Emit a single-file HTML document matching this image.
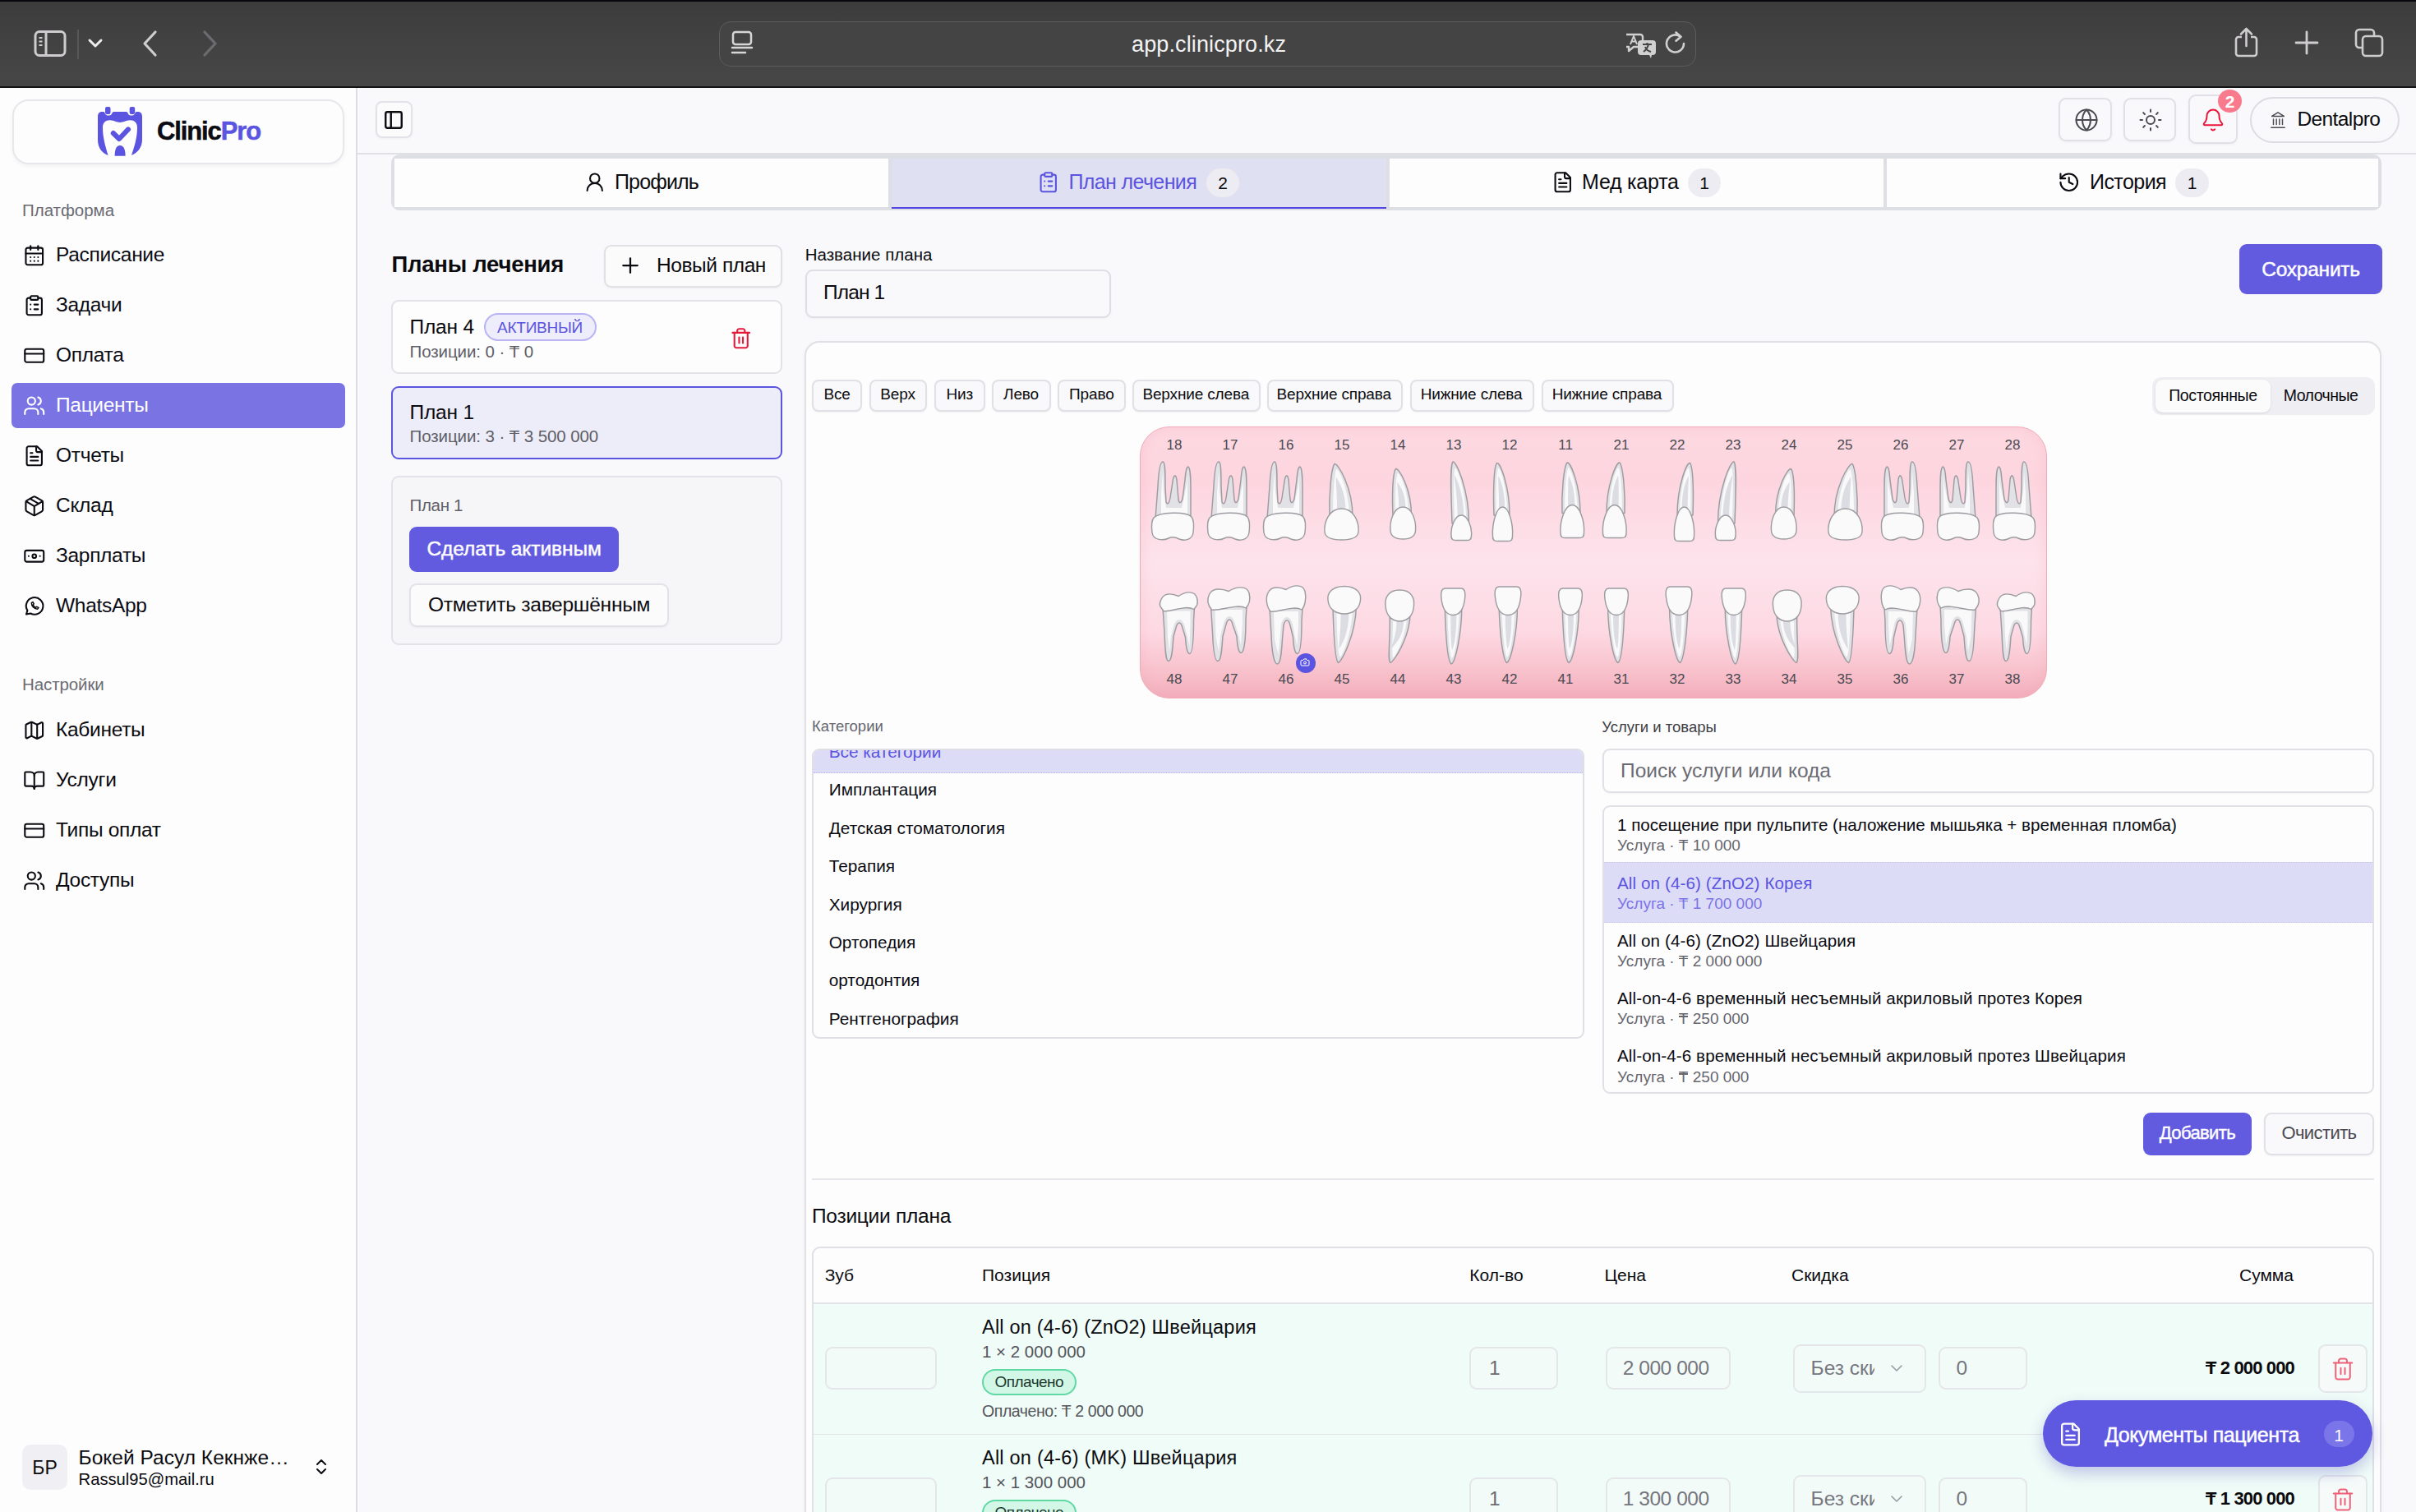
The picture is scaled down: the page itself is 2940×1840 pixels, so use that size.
<!DOCTYPE html><html><head><meta charset="utf-8"><style>*{margin:0;padding:0}
html,body{width:2940px;height:1840px;overflow:hidden;background:#f9f9fb}
body{position:relative;font-family:"Liberation Sans",sans-serif}
.t{position:absolute;white-space:nowrap;line-height:1}
.b{position:absolute}
svg.b{overflow:visible}
.tg{position:relative;display:inline-block;line-height:1}
.tg::after{content:"";position:absolute;left:0.02em;right:0.02em;top:0.305em;height:0.072em;background:currentColor}
.tgb::after{height:0.1em;top:0.3em}
</style></head><body>
<div class="b" style="left:0px;top:0px;width:2940px;height:2px;background:#07070e"></div>
<div class="b" style="left:0px;top:2px;width:2940px;height:103px;background:linear-gradient(180deg,#3c3c3c 0%,#414141 40%,#474747 100%)"></div>
<div class="b" style="left:0px;top:105px;width:2940px;height:2px;background:#141414"></div>
<svg class="b" style="left:40px;top:36px;" width="42" height="34" viewBox="0 0 42 34" fill="none"><rect x="3" y="2.5" width="36" height="29" rx="5" stroke="#cfcccf" stroke-width="3"/><path d="M16 3v28" stroke="#cfcccf" stroke-width="3"/><path d="M7.5 10h4M7.5 14.5h4M7.5 19h4" stroke="#cfcccf" stroke-width="2"/></svg>
<div class="b" style="left:94px;top:36px;width:2px;height:36px;background:#58585c"></div>
<svg class="b" style="left:106px;top:46px;" width="20" height="14" viewBox="0 0 20 14" fill="none"><path d="M3 3l7 7 7-7" stroke="#ececec" stroke-width="3" stroke-linecap="round" stroke-linejoin="round"/></svg>
<svg class="b" style="left:170px;top:36px;" width="26" height="34" viewBox="0 0 26 34" fill="none"><path d="M19 3L6 17l13 14" stroke="#cfcccf" stroke-width="3.2" stroke-linecap="round" stroke-linejoin="round"/></svg>
<svg class="b" style="left:242px;top:36px;" width="26" height="34" viewBox="0 0 26 34" fill="none"><path d="M7 3l13 14L7 31" stroke="#6c6b70" stroke-width="3.2" stroke-linecap="round" stroke-linejoin="round"/></svg>
<div class="b" style="left:875px;top:26px;width:1189px;height:55px;border:1.5px solid #5c5c60;border-radius:14px;background:#444445;box-sizing:border-box"></div>
<svg class="b" style="left:889px;top:36px;" width="30" height="32" viewBox="0 0 30 32" fill="none"><rect x="3" y="3" width="22" height="15" rx="3" stroke="#d6d6d6" stroke-width="2.5"/><path d="M2 22h24M2 28h16" stroke="#d6d6d6" stroke-width="2.5" stroke-linecap="round"/></svg>
<div class="t" style="left:1377.0px;top:41.1px;font-size:27px;color:#f2f2f2;font-weight:400;letter-spacing:0.12px;">app.clinicpro.kz</div>
<svg class="b" style="left:1975px;top:38px;" width="44" height="34" viewBox="0 0 44 34" fill="none"><path d="M4 4h17a3 3 0 0 1 3 3v9a3 3 0 0 1-3 3h-8l-6 5v-5H4" stroke="#d0d0d0" stroke-width="2.4" stroke-linejoin="round"/><path d="M9 16l4-10 4 10M10.5 12.5h5" stroke="#d0d0d0" stroke-width="2"/><rect x="18" y="11" width="22" height="18" rx="4" fill="#d0d0d0"/><path d="M32 29l2 4 1-4" fill="#d0d0d0"/><path d="M24 16h11M29.5 14v2M25 25c3-2 5-5 6-9M27 19c1 3 3 5 7 6" stroke="#444" stroke-width="2"/></svg>
<svg class="b" style="left:2022px;top:36px;" width="34" height="34" viewBox="0 0 34 34" fill="none"><path d="M27 17a10.5 10.5 0 1 1-4-8.3" stroke="#d0d0d0" stroke-width="2.6" stroke-linecap="round"/><path d="M17.5 3.5l6 5.2-6 5" stroke="#d0d0d0" stroke-width="2.6" stroke-linecap="round" stroke-linejoin="round"/></svg>
<svg class="b" style="left:2716px;top:32px;" width="38" height="40" viewBox="0 0 38 40" fill="none"><path d="M12 13H8a3 3 0 0 0-3 3v17a3 3 0 0 0 3 3h19a3 3 0 0 0 3-3V16a3 3 0 0 0-3-3h-4" stroke="#cfcccf" stroke-width="2.6"/><path d="M17.5 24V3M11 9.5l6.5-6.5 6.5 6.5" stroke="#cfcccf" stroke-width="2.6" stroke-linecap="round" stroke-linejoin="round"/></svg>
<svg class="b" style="left:2790px;top:36px;" width="34" height="32" viewBox="0 0 34 32" fill="none"><path d="M17 3v26M4 16h26" stroke="#cfcccf" stroke-width="2.8" stroke-linecap="round"/></svg>
<svg class="b" style="left:2862px;top:32px;" width="42" height="42" viewBox="0 0 42 42" fill="none"><rect x="5" y="4" width="22" height="22" rx="4" stroke="#cfcccf" stroke-width="2.6"/><rect x="13" y="12" width="24" height="24" rx="4" fill="#414141" stroke="#cfcccf" stroke-width="2.6"/></svg>
<div class="b" style="left:0px;top:107px;width:433px;height:1733px;background:#fdfdfe"></div>
<div class="b" style="left:433px;top:107px;width:2px;height:1733px;background:#dcdce3"></div>
<div class="b" style="left:435px;top:107px;width:2505px;height:1733px;background:#f9f9fb"></div>
<div class="b" style="left:15px;top:121px;width:404px;height:79px;border:2px solid #e7e7ec;border-radius:20px;background:#fdfdfe;box-sizing:border-box;box-shadow:0 2px 5px rgba(20,20,40,.05)"></div>
<svg class="b" style="left:110px;top:125px;" width="70" height="70" viewBox="0 0 70 70" fill="none"><path fill="#5b54e0" d="M9 17C9 13 11 11 14 11L16 11C17 11 17.5 12 18 13.5C19 15 20 15.5 21.5 15.5L23 15.5C25 15.5 26 14 26.5 12.5C27 11.5 27.5 11 29 11L43 11C44.5 11 45 11.5 45.5 12.5C46 14 47 15.5 49 15.5L50.5 15.5C52 15.5 53 15 54 13.5C54.5 12 55 11 56 11L58 11C61 11 63 13 63 17L63 45C63 55 57 61 50 64C54 52 57 42 57 30C57 24 53 21 48 21.3C43 21.5 40 24 36 24C32 24 29 21.5 24 21.3C19 21 15 24 15 30C15 42 18 52 21.5 64C14 61 9 55 9 45Z"/><rect x="18" y="5" width="6.5" height="9" rx="2" fill="#5b54e0"/><rect x="47.7" y="5" width="6.5" height="9" rx="2" fill="#5b54e0"/><path d="M27.8 37L35 44L46 32.4" stroke="#5b54e0" stroke-width="6" stroke-linecap="round" stroke-linejoin="round"/><path fill="#5b54e0" d="M29.6 64.8C29.6 56 32 52 36 52C40 52 42.6 56 42.6 64.8Z"/></svg>
<div class="t" style="left:191px;top:143.5px;font-size:31px;font-weight:700;letter-spacing:-1.12px;color:#0b0b12;-webkit-text-stroke:0.5px #0b0b12">Clinic<span style="color:#5b54e0;-webkit-text-stroke:0.5px #5b54e0">Pro</span></div>
<div class="t" style="left:27.0px;top:245.6px;font-size:20.5px;color:#6b6b73;font-weight:400;letter-spacing:-0.02px;">Платформа</div>
<div class="b" style="left:14px;top:466px;width:406px;height:55px;background:#7a73e4;border-radius:7px"></div>
<svg class="b" style="left:27.9px;top:296.6px" width="27.5" height="27.5" viewBox="0 0 24 24" fill="none" stroke="#0b0b12" stroke-width="1.83" stroke-linecap="round" stroke-linejoin="round" ><rect width="18" height="18" x="3" y="4" rx="2"/><path d="M8 2v4"/><path d="M16 2v4"/><path d="M3 10h18"/><path d="M8 14h.01"/><path d="M12 14h.01"/><path d="M16 14h.01"/><path d="M8 18h.01"/><path d="M12 18h.01"/><path d="M16 18h.01"/></svg>
<div class="t" style="left:68.0px;top:298.1px;font-size:24.5px;color:#0b0b12;font-weight:400;letter-spacing:0.00px;letter-spacing:-0.3px">Расписание</div>
<svg class="b" style="left:27.9px;top:357.6px" width="27.5" height="27.5" viewBox="0 0 24 24" fill="none" stroke="#0b0b12" stroke-width="1.83" stroke-linecap="round" stroke-linejoin="round" ><rect width="8" height="4" x="8" y="2" rx="1" ry="1"/><path d="M16 4h2a2 2 0 0 1 2 2v14a2 2 0 0 1-2 2H6a2 2 0 0 1-2-2V6a2 2 0 0 1 2-2h2"/><path d="M12 11h4"/><path d="M12 16h4"/><path d="M8 11h.01"/><path d="M8 16h.01"/></svg>
<div class="t" style="left:68.0px;top:359.1px;font-size:24.5px;color:#0b0b12;font-weight:400;letter-spacing:0.00px;letter-spacing:-0.3px">Задачи</div>
<svg class="b" style="left:27.9px;top:418.6px" width="27.5" height="27.5" viewBox="0 0 24 24" fill="none" stroke="#0b0b12" stroke-width="1.83" stroke-linecap="round" stroke-linejoin="round" ><rect width="20" height="14" x="2" y="5" rx="2"/><line x1="2" x2="22" y1="10" y2="10"/></svg>
<div class="t" style="left:68.0px;top:420.1px;font-size:24.5px;color:#0b0b12;font-weight:400;letter-spacing:0.00px;letter-spacing:-0.3px">Оплата</div>
<svg class="b" style="left:27.9px;top:479.6px" width="27.5" height="27.5" viewBox="0 0 24 24" fill="none" stroke="#ffffff" stroke-width="1.83" stroke-linecap="round" stroke-linejoin="round" ><path d="M16 21v-2a4 4 0 0 0-4-4H6a4 4 0 0 0-4 4v2"/><circle cx="9" cy="7" r="4"/><path d="M22 21v-2a4 4 0 0 0-3-3.87"/><path d="M16 3.13a4 4 0 0 1 0 7.75"/></svg>
<div class="t" style="left:68.0px;top:481.1px;font-size:24.5px;color:#ffffff;font-weight:400;letter-spacing:0.00px;letter-spacing:-0.3px">Пациенты</div>
<svg class="b" style="left:27.9px;top:540.5px" width="27.5" height="27.5" viewBox="0 0 24 24" fill="none" stroke="#0b0b12" stroke-width="1.83" stroke-linecap="round" stroke-linejoin="round" ><path d="M15 2H6a2 2 0 0 0-2 2v16a2 2 0 0 0 2 2h12a2 2 0 0 0 2-2V7Z"/><path d="M14 2v4a2 2 0 0 0 2 2h4"/><path d="M10 9H8"/><path d="M16 13H8"/><path d="M16 17H8"/></svg>
<div class="t" style="left:68.0px;top:542.1px;font-size:24.5px;color:#0b0b12;font-weight:400;letter-spacing:0.00px;letter-spacing:-0.3px">Отчеты</div>
<svg class="b" style="left:27.9px;top:601.5px" width="27.5" height="27.5" viewBox="0 0 24 24" fill="none" stroke="#0b0b12" stroke-width="1.83" stroke-linecap="round" stroke-linejoin="round" ><path d="M11 21.73a2 2 0 0 0 2 0l7-4A2 2 0 0 0 21 16V8a2 2 0 0 0-1-1.73l-7-4a2 2 0 0 0-2 0l-7 4A2 2 0 0 0 3 8v8a2 2 0 0 0 1 1.73z"/><path d="M12 22V12"/><path d="m3.3 7 7.703 4.734a2 2 0 0 0 1.994 0L20.7 7"/><path d="m7.5 4.27 9 5.15"/></svg>
<div class="t" style="left:68.0px;top:603.1px;font-size:24.5px;color:#0b0b12;font-weight:400;letter-spacing:0.00px;letter-spacing:-0.3px">Склад</div>
<svg class="b" style="left:27.9px;top:662.5px" width="27.5" height="27.5" viewBox="0 0 24 24" fill="none" stroke="#0b0b12" stroke-width="1.83" stroke-linecap="round" stroke-linejoin="round" ><rect width="20" height="12" x="2" y="6" rx="2"/><circle cx="12" cy="12" r="2"/><path d="M6 12h.01M18 12h.01"/></svg>
<div class="t" style="left:68.0px;top:664.1px;font-size:24.5px;color:#0b0b12;font-weight:400;letter-spacing:0.00px;letter-spacing:-0.3px">Зарплаты</div>
<svg class="b" style="left:27.9px;top:723.5px" width="27.5" height="27.5" viewBox="0 0 24 24" fill="none" stroke="#0b0b12" stroke-width="1.83" stroke-linecap="round" stroke-linejoin="round" ><path d="M3.5 20.5l1.2-4A9 9 0 1 1 8 19.6z"/><path d="M9 8.5c0 3.5 3 6.5 6.5 6.5l1-1.5-2-1-1 .8c-1.2-.5-2.3-1.6-2.8-2.8l.8-1-1-2z" stroke-width="1.3"/></svg>
<div class="t" style="left:68.0px;top:725.1px;font-size:24.5px;color:#0b0b12;font-weight:400;letter-spacing:0.00px;letter-spacing:-0.3px">WhatsApp</div>
<div class="t" style="left:27.0px;top:822.6px;font-size:20.5px;color:#6b6b73;font-weight:400;letter-spacing:0.00px;letter-spacing:-0.1px">Настройки</div>
<svg class="b" style="left:27.9px;top:874.5px" width="27.5" height="27.5" viewBox="0 0 24 24" fill="none" stroke="#0b0b12" stroke-width="1.83" stroke-linecap="round" stroke-linejoin="round" ><path d="M14.106 5.553a2 2 0 0 0 1.788 0l3.659-1.83A1 1 0 0 1 21 4.619v12.764a1 1 0 0 1-.553.894l-4.553 2.277a2 2 0 0 1-1.788 0l-4.212-2.106a2 2 0 0 0-1.788 0l-3.659 1.83A1 1 0 0 1 3 19.381V6.618a1 1 0 0 1 .553-.894l4.553-2.277a2 2 0 0 1 1.788 0z"/><path d="M15 5.764v15"/><path d="M9 3.236v15"/></svg>
<div class="t" style="left:68.0px;top:876.1px;font-size:24.5px;color:#0b0b0f;font-weight:400;letter-spacing:0.00px;letter-spacing:-0.3px">Кабинеты</div>
<svg class="b" style="left:27.9px;top:935.5px" width="27.5" height="27.5" viewBox="0 0 24 24" fill="none" stroke="#0b0b12" stroke-width="1.83" stroke-linecap="round" stroke-linejoin="round" ><path d="M12 7v14"/><path d="M3 18a1 1 0 0 1-1-1V4a1 1 0 0 1 1-1h5a4 4 0 0 1 4 4 4 4 0 0 1 4-4h5a1 1 0 0 1 1 1v13a1 1 0 0 1-1 1h-6a3 3 0 0 0-3 3 3 3 0 0 0-3-3z"/></svg>
<div class="t" style="left:68.0px;top:937.1px;font-size:24.5px;color:#0b0b0f;font-weight:400;letter-spacing:0.00px;letter-spacing:-0.3px">Услуги</div>
<svg class="b" style="left:27.9px;top:996.5px" width="27.5" height="27.5" viewBox="0 0 24 24" fill="none" stroke="#0b0b12" stroke-width="1.83" stroke-linecap="round" stroke-linejoin="round" ><rect width="20" height="14" x="2" y="5" rx="2"/><line x1="2" x2="22" y1="10" y2="10"/></svg>
<div class="t" style="left:68.0px;top:998.1px;font-size:24.5px;color:#0b0b0f;font-weight:400;letter-spacing:0.00px;letter-spacing:-0.3px">Типы оплат</div>
<svg class="b" style="left:27.9px;top:1057.5px" width="27.5" height="27.5" viewBox="0 0 24 24" fill="none" stroke="#0b0b12" stroke-width="1.83" stroke-linecap="round" stroke-linejoin="round" ><path d="M16 21v-2a4 4 0 0 0-4-4H6a4 4 0 0 0-4 4v2"/><circle cx="9" cy="7" r="4"/><path d="M22 21v-2a4 4 0 0 0-3-3.87"/><path d="M16 3.13a4 4 0 0 1 0 7.75"/></svg>
<div class="t" style="left:68.0px;top:1059.1px;font-size:24.5px;color:#0b0b0f;font-weight:400;letter-spacing:0.00px;letter-spacing:-0.3px">Доступы</div>
<div class="b" style="left:27px;top:1758px;width:55px;height:55px;background:#efeff4;border-radius:10px"></div>
<div class="t" style="left:39.3px;top:1775.3px;font-size:23px;color:#0b0b0f;font-weight:400;letter-spacing:0.00px;">БР</div>
<div class="t" style="left:95.6px;top:1761.6px;font-size:24.5px;color:#0b0b0f;font-weight:400;letter-spacing:0.02px;">Бокей Расул Кекнже…</div>
<div class="t" style="left:95.6px;top:1789.9px;font-size:20.2px;color:#0b0b0f;font-weight:400;letter-spacing:0.00px;">Rassul95@mail.ru</div>
<svg class="b" style="left:379.0px;top:1773.0px" width="24" height="24" viewBox="0 0 24 24" fill="none" stroke="#0b0b12" stroke-width="2.0" stroke-linecap="round" stroke-linejoin="round" ><path d="m7 15 5 5 5-5"/><path d="m7 9 5-5 5 5"/></svg>
<div class="b" style="left:435px;top:186px;width:2505px;height:2px;background:#e0e0e6"></div>
<div class="b" style="left:457px;top:123px;width:45px;height:45px;border:2px solid #e2e2e8;border-radius:8px;background:#fbfbfc;box-sizing:border-box;box-shadow:0 1px 3px rgba(0,0,0,.04)"></div>
<svg class="b" style="left:465.5px;top:132.5px" width="26" height="26" viewBox="0 0 24 24" fill="none" stroke="#0b0b12" stroke-width="2.2" stroke-linecap="round" stroke-linejoin="round" ><rect width="18" height="18" x="3" y="3" rx="2"/><path d="M9 3v18"/></svg>
<div class="b" style="left:2505px;top:119px;width:65px;height:53px;border:2px solid #e0e0e6;border-radius:9px;background:#f9f9fb;box-sizing:border-box;box-shadow:0 1px 3px rgba(0,0,0,.05)"></div>
<svg class="b" style="left:2523.5px;top:130.5px" width="30" height="30" viewBox="0 0 24 24" fill="none" stroke="#4a4a52" stroke-width="1.6" stroke-linecap="round" stroke-linejoin="round" ><circle cx="12" cy="12" r="10"/><path d="M12 2a14.5 14.5 0 0 0 0 20 14.5 14.5 0 0 0 0-20"/><path d="M2 12h20"/></svg>
<div class="b" style="left:2584px;top:119px;width:64px;height:53px;border:2px solid #e0e0e6;border-radius:9px;background:#f9f9fb;box-sizing:border-box;box-shadow:0 1px 3px rgba(0,0,0,.05)"></div>
<svg class="b" style="left:2601.5px;top:130.5px" width="30" height="30" viewBox="0 0 24 24" fill="none" stroke="#4a4a52" stroke-width="1.6" stroke-linecap="round" stroke-linejoin="round" ><circle cx="12" cy="12" r="4"/><path d="M12 2v2"/><path d="M12 20v2"/><path d="m4.93 4.93 1.41 1.41"/><path d="m17.66 17.66 1.41 1.41"/><path d="M2 12h2"/><path d="M20 12h2"/><path d="m6.34 17.66-1.41 1.41"/><path d="m19.07 4.93-1.41 1.41"/></svg>
<div class="b" style="left:2663px;top:115px;width:60px;height:60px;border:2px solid #e0e0e6;border-radius:9px;background:#f9f9fb;box-sizing:border-box;box-shadow:0 1px 3px rgba(0,0,0,.05)"></div>
<svg class="b" style="left:2677.5px;top:130.5px" width="30" height="30" viewBox="0 0 24 24" fill="none" stroke="#e8173a" stroke-width="1.6" stroke-linecap="round" stroke-linejoin="round" ><path d="M10.268 21a2 2 0 0 0 3.464 0"/><path d="M3.262 15.326A1 1 0 0 0 4 17h16a1 1 0 0 0 .74-1.673C19.41 13.956 18 12.499 18 8A6 6 0 0 0 6 8c0 4.499-1.411 5.956-2.738 7.326"/></svg>
<div class="b" style="left:2699px;top:109px;width:29px;height:28px;background:#f87a8c;border-radius:50%"></div>
<div class="t" style="left:2707.7px;top:113.2px;font-size:21px;color:#fff;font-weight:700;letter-spacing:0.00px;">2</div>
<div class="b" style="left:2738px;top:118px;width:182px;height:56px;border:2px solid #dcdce2;border-radius:28px;box-sizing:border-box"></div>
<svg class="b" style="left:2760.5px;top:134.5px" width="22" height="22" viewBox="0 0 24 24" fill="none" stroke="#4a4a52" stroke-width="1.6" stroke-linecap="round" stroke-linejoin="round" ><line x1="3" x2="21" y1="22" y2="22"/><line x1="6" x2="6" y1="18" y2="11"/><line x1="10" x2="10" y1="18" y2="11"/><line x1="14" x2="14" y1="18" y2="11"/><line x1="18" x2="18" y1="18" y2="11"/><polygon points="12 2 20 7 4 7"/></svg>
<div class="t" style="left:2795.4px;top:133.4px;font-size:24.5px;color:#0b0b0f;font-weight:400;letter-spacing:-0.58px;">Dentalpro</div>
<div class="b" style="left:476px;top:188px;width:2422px;height:68px;background:#dedee5;border-radius:10px"></div>
<div class="b" style="left:480px;top:193px;width:601px;height:59px;background:#fdfdfe"></div>
<div class="b" style="left:1085px;top:193px;width:602px;height:59px;background:#e0e0f3"></div>
<div class="b" style="left:1085px;top:252px;width:602px;height:2px;background:#4f46e5"></div>
<div class="b" style="left:1691px;top:193px;width:601px;height:59px;background:#fdfdfe"></div>
<div class="b" style="left:2296px;top:193px;width:598px;height:59px;background:#fdfdfe"></div>
<div class="b" style="left:2888px;top:193px;width:6px;height:59px;background:#fdfdfe"></div>
<svg class="b" style="left:709.8px;top:207.8px" width="27.5" height="27.5" viewBox="0 0 24 24" fill="none" stroke="#0b0b12" stroke-width="1.83" stroke-linecap="round" stroke-linejoin="round" ><circle cx="12" cy="8" r="5"/><path d="M20 21a8 8 0 0 0-16 0"/></svg>
<div class="t" style="left:748.0px;top:208.8px;font-size:25px;color:#0b0b0f;font-weight:400;letter-spacing:-0.85px;">Профиль</div>
<svg class="b" style="left:1261.8px;top:207.5px" width="27.5" height="27.5" viewBox="0 0 24 24" fill="none" stroke="#5b54e0" stroke-width="1.83" stroke-linecap="round" stroke-linejoin="round" ><rect width="8" height="4" x="8" y="2" rx="1" ry="1"/><path d="M16 4h2a2 2 0 0 1 2 2v14a2 2 0 0 1-2 2H6a2 2 0 0 1-2-2V6a2 2 0 0 1 2-2h2"/><path d="M12 11h4"/><path d="M12 16h4"/><path d="M8 11h.01"/><path d="M8 16h.01"/></svg>
<div class="t" style="left:1300.5px;top:208.8px;font-size:25px;color:#5b54e0;font-weight:400;letter-spacing:-0.63px;">План лечения</div>
<div class="b" style="left:1468px;top:205px;width:40px;height:35px;background:#ececf2;border-radius:18px"></div>
<div class="t" style="left:1482.2px;top:212.2px;font-size:21px;color:#0b0b0f;font-weight:400;letter-spacing:0.00px;">2</div>
<svg class="b" style="left:1888.1px;top:207.5px" width="27.5" height="27.5" viewBox="0 0 24 24" fill="none" stroke="#0b0b12" stroke-width="1.83" stroke-linecap="round" stroke-linejoin="round" ><path d="M15 2H6a2 2 0 0 0-2 2v16a2 2 0 0 0 2 2h12a2 2 0 0 0 2-2V7Z"/><path d="M14 2v4a2 2 0 0 0 2 2h4"/><path d="M10 9H8"/><path d="M16 13H8"/><path d="M16 17H8"/></svg>
<div class="t" style="left:1925.0px;top:208.8px;font-size:25px;color:#0b0b0f;font-weight:400;letter-spacing:-0.23px;">Мед карта</div>
<div class="b" style="left:2054px;top:205px;width:40px;height:35px;background:#ececf2;border-radius:18px"></div>
<div class="t" style="left:2068.2px;top:212.2px;font-size:21px;color:#0b0b0f;font-weight:400;letter-spacing:0.00px;">1</div>
<svg class="b" style="left:2503.8px;top:207.8px" width="27.5" height="27.5" viewBox="0 0 24 24" fill="none" stroke="#0b0b12" stroke-width="1.83" stroke-linecap="round" stroke-linejoin="round" ><path d="M3 12a9 9 0 1 0 9-9 9.75 9.75 0 0 0-6.74 2.74L3 8"/><path d="M3 3v5h5"/><path d="M12 7v5l4 2"/></svg>
<div class="t" style="left:2543.0px;top:208.8px;font-size:25px;color:#0b0b0f;font-weight:400;letter-spacing:-0.56px;">История</div>
<div class="b" style="left:2647px;top:205px;width:41px;height:35px;background:#ececf2;border-radius:18px"></div>
<div class="t" style="left:2661.7px;top:212.2px;font-size:21px;color:#0b0b0f;font-weight:400;letter-spacing:0.00px;">1</div>
<div class="t" style="left:476.5px;top:308.4px;font-size:27.5px;color:#0b0b0f;font-weight:700;letter-spacing:-0.25px;">Планы лечения</div>
<div class="b" style="left:735px;top:298px;width:217px;height:52px;border:2px solid #e0e0e6;border-radius:9px;background:#fbfbfc;box-sizing:border-box;box-shadow:0 1px 3px rgba(0,0,0,.05)"></div>
<svg class="b" style="left:752.0px;top:308.0px" width="30" height="30" viewBox="0 0 24 24" fill="none" stroke="#0b0b12" stroke-width="1.8" stroke-linecap="round" stroke-linejoin="round" ><path d="M5 12h14"/><path d="M12 5v14"/></svg>
<div class="t" style="left:799.0px;top:311.0px;font-size:24.5px;color:#0b0b0f;font-weight:400;letter-spacing:-0.42px;">Новый план</div>
<div class="b" style="left:476px;top:365px;width:476px;height:90px;border:2px solid #e2e2e8;border-radius:9px;background:#fdfdfe;box-sizing:border-box"></div>
<div class="t" style="left:498.6px;top:386.3px;font-size:24.5px;color:#0b0b0f;font-weight:400;letter-spacing:0.00px;letter-spacing:-0.2px">План 4</div>
<div class="b" style="left:589px;top:381px;width:137px;height:34px;border:2px solid #b9b4f4;border-radius:17px;background:#eeedfc;box-sizing:border-box"></div>
<div class="t" style="left:605.0px;top:389.4px;font-size:19px;color:#5b54e0;font-weight:400;letter-spacing:-0.23px;">АКТИВНЫЙ</div>
<div class="t" style="left:498.6px;top:417.6px;font-size:20.5px;color:#5f5f67;font-weight:400;letter-spacing:0.00px;letter-spacing:-0.1px">Позиции: 0 · <span class="tg">T</span> 0</div>
<svg class="b" style="left:888.2px;top:397.8px" width="27.5" height="27.5" viewBox="0 0 24 24" fill="none" stroke="#e5193a" stroke-width="1.83" stroke-linecap="round" stroke-linejoin="round" ><path d="M3 6h18"/><path d="M19 6v14c0 1-1 2-2 2H7c-1 0-2-1-2-2V6"/><path d="M8 6V4c0-1 1-2 2-2h4c1 0 2 1 2 2v2"/><line x1="10" x2="10" y1="11" y2="17"/><line x1="14" x2="14" y1="11" y2="17"/></svg>
<div class="b" style="left:476px;top:470px;width:476px;height:89px;border:2.5px solid #5b54e0;border-radius:9px;background:#ededf9;box-sizing:border-box"></div>
<div class="t" style="left:498.6px;top:490.3px;font-size:24.5px;color:#0b0b0f;font-weight:400;letter-spacing:0.00px;letter-spacing:-0.2px">План 1</div>
<div class="t" style="left:498.6px;top:520.6px;font-size:20.5px;color:#5f5f67;font-weight:400;letter-spacing:0.00px;letter-spacing:-0.1px">Позиции: 3 · <span class="tg">T</span> 3 500 000</div>
<div class="b" style="left:476px;top:579px;width:476px;height:206px;border:2px solid #e2e2e8;border-radius:9px;background:#f6f6f9;box-sizing:border-box"></div>
<div class="t" style="left:498.6px;top:604.9px;font-size:20.5px;color:#5f5f67;font-weight:400;letter-spacing:-0.35px;">План 1</div>
<div class="b" style="left:498px;top:641px;width:255px;height:55px;background:#635bdf;border-radius:9px"></div>
<div class="t" style="left:519.4px;top:656.3px;font-size:24.5px;color:#fff;font-weight:400;letter-spacing:-0.07px;-webkit-text-stroke:0.45px #fff">Сделать активным</div>
<div class="b" style="left:498px;top:710px;width:316px;height:53px;border:2px solid #e2e2e8;border-radius:9px;background:#fbfbfc;box-sizing:border-box;box-shadow:0 1px 3px rgba(0,0,0,.05)"></div>
<div class="t" style="left:521.0px;top:724.3px;font-size:24.5px;color:#0b0b0f;font-weight:400;letter-spacing:-0.26px;">Отметить завершённым</div>
<div class="t" style="left:979.7px;top:299.9px;font-size:20.5px;color:#0b0b0f;font-weight:400;letter-spacing:0.02px;">Название плана</div>
<div class="b" style="left:980px;top:328px;width:372px;height:59px;border:2px solid #dedee4;border-radius:9px;background:#f9f9fb;box-sizing:border-box;box-shadow:0 1px 3px rgba(0,0,0,.04)"></div>
<div class="t" style="left:1002.0px;top:344.3px;font-size:24.5px;color:#0b0b0f;font-weight:400;letter-spacing:-0.86px;">План 1</div>
<div class="b" style="left:2725px;top:297px;width:174px;height:61px;background:#635bdf;border-radius:9px"></div>
<div class="t" style="left:2752.2px;top:315.6px;font-size:24.5px;color:#fff;font-weight:400;letter-spacing:-0.23px;-webkit-text-stroke:0.45px #fff">Сохранить</div>
<div class="b" style="left:979px;top:415px;width:1919px;height:1485px;border:2px solid #e0e0e6;border-radius:18px;background:#fdfdfe;box-sizing:border-box;box-shadow:0 1px 4px rgba(0,0,0,.04)"></div>
<div class="b" style="left:988px;top:461.5px;width:61px;height:39.5px;border:2px solid #e0e0e6;border-radius:8px;background:#f9f9fb;box-sizing:border-box;box-shadow:0 1px 2px rgba(0,0,0,.05)"></div>
<div class="t" style="left:1002.5px;top:470.4px;font-size:19px;color:#0b0b0f;font-weight:400;letter-spacing:0.00px;letter-spacing:-0.15px">Все</div>
<div class="b" style="left:1058px;top:461.5px;width:70px;height:39.5px;border:2px solid #e0e0e6;border-radius:8px;background:#f9f9fb;box-sizing:border-box;box-shadow:0 1px 2px rgba(0,0,0,.05)"></div>
<div class="t" style="left:1071.3px;top:470.4px;font-size:19px;color:#0b0b0f;font-weight:400;letter-spacing:0.00px;letter-spacing:-0.15px">Верх</div>
<div class="b" style="left:1137px;top:461.5px;width:62px;height:39.5px;border:2px solid #e0e0e6;border-radius:8px;background:#f9f9fb;box-sizing:border-box;box-shadow:0 1px 2px rgba(0,0,0,.05)"></div>
<div class="t" style="left:1151.4px;top:470.4px;font-size:19px;color:#0b0b0f;font-weight:400;letter-spacing:0.00px;letter-spacing:-0.15px">Низ</div>
<div class="b" style="left:1207px;top:461.5px;width:72px;height:39.5px;border:2px solid #e0e0e6;border-radius:8px;background:#f9f9fb;box-sizing:border-box;box-shadow:0 1px 2px rgba(0,0,0,.05)"></div>
<div class="t" style="left:1221.1px;top:470.4px;font-size:19px;color:#0b0b0f;font-weight:400;letter-spacing:0.00px;letter-spacing:-0.15px">Лево</div>
<div class="b" style="left:1287px;top:461.5px;width:83px;height:39.5px;border:2px solid #e0e0e6;border-radius:8px;background:#f9f9fb;box-sizing:border-box;box-shadow:0 1px 2px rgba(0,0,0,.05)"></div>
<div class="t" style="left:1301.1px;top:470.4px;font-size:19px;color:#0b0b0f;font-weight:400;letter-spacing:0.00px;letter-spacing:-0.15px">Право</div>
<div class="b" style="left:1378px;top:461.5px;width:156px;height:39.5px;border:2px solid #e0e0e6;border-radius:8px;background:#f9f9fb;box-sizing:border-box;box-shadow:0 1px 2px rgba(0,0,0,.05)"></div>
<div class="t" style="left:1390.4px;top:470.4px;font-size:19px;color:#0b0b0f;font-weight:400;letter-spacing:0.00px;letter-spacing:-0.15px">Верхние слева</div>
<div class="b" style="left:1542px;top:461.5px;width:165px;height:39.5px;border:2px solid #e0e0e6;border-radius:8px;background:#f9f9fb;box-sizing:border-box;box-shadow:0 1px 2px rgba(0,0,0,.05)"></div>
<div class="t" style="left:1553.6px;top:470.4px;font-size:19px;color:#0b0b0f;font-weight:400;letter-spacing:0.00px;letter-spacing:-0.15px">Верхние справа</div>
<div class="b" style="left:1716px;top:461.5px;width:151px;height:39.5px;border:2px solid #e0e0e6;border-radius:8px;background:#f9f9fb;box-sizing:border-box;box-shadow:0 1px 2px rgba(0,0,0,.05)"></div>
<div class="t" style="left:1728.7px;top:470.4px;font-size:19px;color:#0b0b0f;font-weight:400;letter-spacing:0.00px;letter-spacing:-0.15px">Нижние слева</div>
<div class="b" style="left:1876px;top:461.5px;width:161px;height:39.5px;border:2px solid #e0e0e6;border-radius:8px;background:#f9f9fb;box-sizing:border-box;box-shadow:0 1px 2px rgba(0,0,0,.05)"></div>
<div class="t" style="left:1888.8px;top:470.4px;font-size:19px;color:#0b0b0f;font-weight:400;letter-spacing:0.00px;letter-spacing:-0.15px">Нижние справа</div>
<div class="b" style="left:2619px;top:458.5px;width:271px;height:46.5px;background:#eeeef3;border-radius:11px"></div>
<div class="b" style="left:2623px;top:461.5px;width:140px;height:40.5px;background:#fbfbfc;border-radius:9px;box-shadow:0 1px 3px rgba(0,0,0,.10)"></div>
<div class="t" style="left:2639.2px;top:472.0px;font-size:19.5px;color:#0b0b0f;font-weight:400;letter-spacing:-0.36px;">Постоянные</div>
<div class="t" style="left:2778.8px;top:472.0px;font-size:19.5px;color:#0b0b0f;font-weight:400;letter-spacing:-0.53px;">Молочные</div>
<div class="b" style="left:1387px;top:519px;width:1104px;height:331px;border:1.5px solid #f1a9b6;border-radius:36px;box-sizing:border-box;background:linear-gradient(180deg,#fdd9e1 0%,#fdd5df 20%,#fde3ec 50%,#fdd9e3 76%,#f7bec9 92%,#f3afbc 100%);box-shadow:inset 0 0 16px rgba(235,140,165,.20)"></div>
<svg class="b" style="left:0;top:0" width="2940" height="1840" viewBox="0 0 2940 1840"><g><path d="M1406,631 L1409,592 C1410,572 1412,562 1415,562 C1418,562 1418,575 1418,592 L1419,611 C1421,615 1423,612 1424,606 L1427,586 C1428,578 1431,576 1432,584 L1434,608 C1435,613 1437,613 1439,607 L1442,584 C1443,572 1444,568 1446,568 C1449,570 1449,584 1449,600 L1449,631 Z" fill="#e1e1e6" stroke="#9c9ca1" stroke-width="1.45" stroke-linejoin="round"/><path d="M1413,628 L1413,600 L1415,574 L1416,598 L1419,618 L1438,618 L1444,590 L1445,578 L1445,628 Z" fill="#f9f9fa" stroke-linejoin="round"/><path d="M1404,630 C1411,623 1443,622 1450,629 C1453,633 1453,640 1452,648 C1451,656 1443,659 1435,656 C1431,654 1426,653 1422,655 C1416,658 1403,658 1402,648 C1401,640 1401,634 1404,630 Z" fill="#fafafb" stroke="#9c9ca1" stroke-width="1.45" stroke-linejoin="round"/><path d="M1474,631 L1477,592 C1478,572 1480,562 1483,562 C1486,562 1486,575 1486,592 L1487,611 C1489,615 1491,612 1492,606 L1495,586 C1496,578 1499,576 1500,584 L1502,608 C1503,613 1505,613 1507,607 L1510,584 C1511,572 1512,568 1514,568 C1517,570 1517,584 1517,600 L1517,631 Z" fill="#e1e1e6" stroke="#9c9ca1" stroke-width="1.45" stroke-linejoin="round"/><path d="M1481,628 L1481,600 L1483,574 L1484,598 L1487,618 L1506,618 L1512,590 L1513,578 L1513,628 Z" fill="#f9f9fa" stroke-linejoin="round"/><path d="M1472,630 C1479,623 1511,622 1518,629 C1521,633 1521,640 1520,648 C1519,656 1511,659 1503,656 C1499,654 1494,653 1490,655 C1484,658 1471,658 1470,648 C1469,640 1469,634 1472,630 Z" fill="#fafafb" stroke="#9c9ca1" stroke-width="1.45" stroke-linejoin="round"/><path d="M1542,631 L1545,592 C1546,572 1548,562 1551,562 C1554,562 1554,575 1554,592 L1555,611 C1557,615 1559,612 1560,606 L1563,586 C1564,578 1567,576 1568,584 L1570,608 C1571,613 1573,613 1575,607 L1578,584 C1579,572 1580,568 1582,568 C1585,570 1585,584 1585,600 L1585,631 Z" fill="#e1e1e6" stroke="#9c9ca1" stroke-width="1.45" stroke-linejoin="round"/><path d="M1549,628 L1549,600 L1551,574 L1552,598 L1555,618 L1574,618 L1580,590 L1581,578 L1581,628 Z" fill="#f9f9fa" stroke-linejoin="round"/><path d="M1540,630 C1547,623 1579,622 1586,629 C1589,633 1589,640 1588,648 C1587,656 1579,659 1571,656 C1567,654 1562,653 1558,655 C1552,658 1539,658 1538,648 C1537,640 1537,634 1540,630 Z" fill="#fafafb" stroke="#9c9ca1" stroke-width="1.45" stroke-linejoin="round"/><path d="M1618,629 C1617,602.75 1620,569.5 1624,564.5 C1628,563.5 1646,592.75 1646,629 Z" fill="#e1e1e6" stroke="#9c9ca1" stroke-width="1.45" stroke-linejoin="round"/><path d="M1618,629 C1617,602.75 1620,569.5 1624,564.5 C1628,563.5 1646,592.75 1646,629 Z" fill="#f9f9fa" stroke-linejoin="round" transform="translate(1632.00,629.00) scale(0.7,0.9) translate(-1632.00,-629.00)"/><path d="M1627.24,625 C1627.24,596.75 1625,584.5 1626,580.5 C1628,584.5 1638.16,596.75 1637.6,625 Z" fill="#dcdde3" stroke-linejoin="round"/><path d="M1632.5,619 C1648.08,619 1654,636.1 1653,647.5 C1652,655 1642.75,657 1632.5,657 C1622.25,657 1613,655 1612,647.5 C1611,636.1 1616.92,619 1632.5,619 Z" fill="#fafafb" stroke="#9c9ca1" stroke-width="1.45" stroke-linejoin="round"/><path d="M1695,627 C1694,604.75 1694.5,575.5 1698.5,570.5 C1702.5,569.5 1717.5,594.75 1717.5,627 Z" fill="#e1e1e6" stroke="#9c9ca1" stroke-width="1.45" stroke-linejoin="round"/><path d="M1695,627 C1694,604.75 1694.5,575.5 1698.5,570.5 C1702.5,569.5 1717.5,594.75 1717.5,627 Z" fill="#f9f9fa" stroke-linejoin="round" transform="translate(1706.25,627.00) scale(0.7,0.9) translate(-1706.25,-627.00)"/><path d="M1702.425,623 C1702.425,598.75 1699.5,590.5 1700.5,586.5 C1702.5,590.5 1711.2,598.75 1710.75,623 Z" fill="#dcdde3" stroke-linejoin="round"/><path d="M1707.25,617 C1718.84,617 1723.5,634.55 1722.5,646.25 C1721.5,654 1714.875,656 1707.25,656 C1699.625,656 1693,654 1692,646.25 C1691,634.55 1695.66,617 1707.25,617 Z" fill="#fafafb" stroke="#9c9ca1" stroke-width="1.45" stroke-linejoin="round"/><path d="M1767,637 C1766,605.5 1764,567 1768,562 C1772,561 1787.5,595.5 1787.5,637 Z" fill="#e1e1e6" stroke="#9c9ca1" stroke-width="1.45" stroke-linejoin="round"/><path d="M1767,637 C1766,605.5 1764,567 1768,562 C1772,561 1787.5,595.5 1787.5,637 Z" fill="#f9f9fa" stroke-linejoin="round" transform="translate(1777.25,637.00) scale(0.7,0.9) translate(-1777.25,-637.00)"/><path d="M1773.765,633 C1773.765,599.5 1769,582 1770,578 C1772,582 1781.76,599.5 1781.35,633 Z" fill="#dcdde3" stroke-linejoin="round"/><path d="M1766,651.5 C1765,642.25 1770.3,627 1778.25,627 C1786.2,627 1791.5,642.25 1790.5,651.5 C1790.5,657.5 1787.5,657.5 1784.5,657.5 L1772,657.5 C1769,657.5 1766,657.5 1766,651.5 Z" fill="#fafafb" stroke="#9c9ca1" stroke-width="1.45" stroke-linejoin="round"/><path d="M1818,627 C1817,601.25 1817.5,568.5 1821.5,563.5 C1825.5,562.5 1837,591.25 1837,627 Z" fill="#e1e1e6" stroke="#9c9ca1" stroke-width="1.45" stroke-linejoin="round"/><path d="M1818,627 C1817,601.25 1817.5,568.5 1821.5,563.5 C1825.5,562.5 1837,591.25 1837,627 Z" fill="#f9f9fa" stroke-linejoin="round" transform="translate(1827.50,627.00) scale(0.7,0.9) translate(-1827.50,-627.00)"/><path d="M1824.27,623 C1824.27,595.25 1822.5,583.5 1823.5,579.5 C1825.5,583.5 1831.68,595.25 1831.3,623 Z" fill="#dcdde3" stroke-linejoin="round"/><path d="M1816.5,652.5 C1815.5,637.75 1820.7,617 1828.5,617 C1836.3,617 1841.5,637.75 1840.5,652.5 C1840.5,658.5 1837.5,658.5 1834.5,658.5 L1822.5,658.5 C1819.5,658.5 1816.5,658.5 1816.5,652.5 Z" fill="#fafafb" stroke="#9c9ca1" stroke-width="1.45" stroke-linejoin="round"/><path d="M1901,624.5 C1900,599.75 1903,568 1907,563 C1911,562 1923,589.75 1923,624.5 Z" fill="#e1e1e6" stroke="#9c9ca1" stroke-width="1.45" stroke-linejoin="round"/><path d="M1901,624.5 C1900,599.75 1903,568 1907,563 C1911,562 1923,589.75 1923,624.5 Z" fill="#f9f9fa" stroke-linejoin="round" transform="translate(1912.00,624.50) scale(0.7,0.9) translate(-1912.00,-624.50)"/><path d="M1908.26,620.5 C1908.26,593.75 1908,583 1909,579 C1911,583 1916.84,593.75 1916.4,620.5 Z" fill="#dcdde3" stroke-linejoin="round"/><path d="M1899,648.5 C1898,634.5 1904.1,614.5 1913.25,614.5 C1922.4,614.5 1928.5,634.5 1927.5,648.5 C1927.5,654.5 1924.5,654.5 1921.5,654.5 L1905,654.5 C1902,654.5 1899,654.5 1899,648.5 Z" fill="#fafafb" stroke="#9c9ca1" stroke-width="1.45" stroke-linejoin="round"/><path d="M1415,739.5 L1417,769.5 C1418,796.5 1419,804.5 1422,804.5 C1426,804.5 1427,789.5 1428,774.5 L1431,764 C1433,756 1437,756 1439,764 L1442.5,775.5 C1443.5,793.5 1446.5,795.5 1447.5,795.5 C1450.5,795.5 1452.5,785.5 1452.5,755.5 L1453.5,739.5 Z" fill="#e1e1e6" stroke="#9c9ca1" stroke-width="1.45" stroke-linejoin="round"/><path d="M1420,743.5 L1421,774.5 L1423,792.5 L1425,774.5 L1428,763 C1431,751 1439,751 1442,763 L1444.5,773.5 L1447.5,785.5 L1448.5,760.5 L1448.5,743.5 Z" fill="#f9f9fa" stroke-linejoin="round"/><path d="M1413,729.5 C1417,720.5 1427.275,722.5 1434.25,725.5 C1441.225,720.5 1453.5,717.5 1456.5,727.5 C1458.5,735.5 1456.5,737.5 1452.5,741.5 C1442.5,735.5 1424.95,745.5 1416,743.5 C1411,737.5 1410,735.5 1413,729.5 Z" fill="#fafafb" stroke="#9c9ca1" stroke-width="1.45" stroke-linejoin="round"/><path d="M1473.5,738 L1475.5,769.5 C1476.5,796.5 1479,804.5 1482,804.5 C1486,804.5 1487,789.5 1488,774.5 L1492,760 C1494,752 1498,752 1500,760 L1505,774.5 C1506,792.5 1509,794.5 1510,794.5 C1513,794.5 1516,784.5 1516,754.5 L1517,738 Z" fill="#e1e1e6" stroke="#9c9ca1" stroke-width="1.45" stroke-linejoin="round"/><path d="M1478.5,742 L1479.5,774.5 L1483,792.5 L1485,774.5 L1489,759 C1492,747 1500,747 1503,759 L1507,772.5 L1510,784.5 L1512,759.5 L1512,742 Z" fill="#f9f9fa" stroke-linejoin="round"/><path d="M1471.5,723.5 C1475.5,714.5 1487.525,716.5 1495.25,719.5 C1502.975,714.5 1517,711.5 1520,721.5 C1522,729.5 1520,736 1516,740 C1506,734 1484.95,744 1474.5,742 C1469.5,736 1468.5,729.5 1471.5,723.5 Z" fill="#fafafb" stroke="#9c9ca1" stroke-width="1.45" stroke-linejoin="round"/><path d="M1545,740 L1547,773 C1548,800 1551.5,808 1554.5,808 C1558.5,808 1559.5,793 1560.5,778 L1562,761 C1564,753 1568,753 1570,761 L1573.5,775.5 C1574.5,793.5 1577.5,795.5 1578.5,795.5 C1581.5,795.5 1584,785.5 1584,755.5 L1585,740 Z" fill="#e1e1e6" stroke="#9c9ca1" stroke-width="1.45" stroke-linejoin="round"/><path d="M1550,744 L1551,778 L1555.5,796 L1557.5,778 L1559,760 C1562,748 1570,748 1573,760 L1575.5,773.5 L1578.5,785.5 L1580,760.5 L1580,744 Z" fill="#f9f9fa" stroke-linejoin="round"/><path d="M1543,721.5 C1547,712.5 1557.8,714.5 1565.0,717.5 C1572.2,712.5 1585,709.5 1588,719.5 C1590,727.5 1588,738 1584,742 C1574,736 1555.4,746 1546,744 C1541,738 1540,727.5 1543,721.5 Z" fill="#fafafb" stroke="#9c9ca1" stroke-width="1.45" stroke-linejoin="round"/><path d="M1621.925,737 C1622.925,775.75 1624.5,803.5 1628.5,806.5 C1633.5,804.5 1650.365,769.75 1650.365,737 Z" fill="#e1e1e6" stroke="#9c9ca1" stroke-width="1.45" stroke-linejoin="round"/><path d="M1621.925,737 C1622.925,775.75 1624.5,803.5 1628.5,806.5 C1633.5,804.5 1650.365,769.75 1650.365,737 Z" fill="#f9f9fa" stroke-linejoin="round" transform="translate(1636.14,737.00) scale(0.7,0.9) translate(-1636.14,-737.00)"/><path d="M1631.5946,745 C1631.5946,771.75 1628.5,786.5 1629.5,789.5 C1631.5,786.5 1641.833,771.75 1641.2642,745 Z" fill="#dcdde3" stroke-linejoin="round"/><path d="M1635.75,713.5 C1652.5,713.5 1656.5,723.5 1655.5,730.25 C1654.5,743 1643.65,747 1635.75,747 C1627.85,747 1617,743 1616,730.25 C1615,723.5 1619,713.5 1635.75,713.5 Z" fill="#fafafb" stroke="#9c9ca1" stroke-width="1.45" stroke-linejoin="round"/><path d="M1691.175,746 C1692.175,780.25 1688,803.5 1692,806.5 C1697,804.5 1716.015,774.25 1716.015,746 Z" fill="#e1e1e6" stroke="#9c9ca1" stroke-width="1.45" stroke-linejoin="round"/><path d="M1691.175,746 C1692.175,780.25 1688,803.5 1692,806.5 C1697,804.5 1716.015,774.25 1716.015,746 Z" fill="#f9f9fa" stroke-linejoin="round" transform="translate(1703.60,746.00) scale(0.7,0.9) translate(-1703.60,-746.00)"/><path d="M1699.6206,754 C1699.6206,776.25 1692,786.5 1693,789.5 C1695,786.5 1708.563,776.25 1708.0662,754 Z" fill="#dcdde3" stroke-linejoin="round"/><path d="M1703.25,718 C1717.5,718 1721.5,728 1720.5,737.0 C1719.5,752 1710.15,756 1703.25,756 C1696.35,756 1687,752 1686,737.0 C1685,728 1689,718 1703.25,718 Z" fill="#fafafb" stroke="#9c9ca1" stroke-width="1.45" stroke-linejoin="round"/><path d="M1758.275,738.5 C1759.275,777.25 1762,805 1766,808 C1771,806 1778.795,771.25 1778.795,738.5 Z" fill="#e1e1e6" stroke="#9c9ca1" stroke-width="1.45" stroke-linejoin="round"/><path d="M1758.275,738.5 C1759.275,777.25 1762,805 1766,808 C1771,806 1778.795,771.25 1778.795,738.5 Z" fill="#f9f9fa" stroke-linejoin="round" transform="translate(1768.54,738.50) scale(0.7,0.9) translate(-1768.54,-738.50)"/><path d="M1765.2518,746.5 C1765.2518,773.25 1766,788 1767,791 C1769,788 1772.6390000000001,773.25 1772.2286000000001,746.5 Z" fill="#dcdde3" stroke-linejoin="round"/><path d="M1759,716 L1777.5,716 C1782.5,716 1783.5,721 1782.5,729 C1780.5,744.5 1773.95,748.5 1768.25,748.5 C1762.55,748.5 1756,744.5 1754,729 C1753,721 1754,716 1759,716 Z" fill="#fafafb" stroke="#9c9ca1" stroke-width="1.45" stroke-linejoin="round"/><path d="M1824.15,738.5 C1825.15,776.5 1829.5,803.5 1833.5,806.5 C1838.5,804.5 1846.47,770.5 1846.47,738.5 Z" fill="#e1e1e6" stroke="#9c9ca1" stroke-width="1.45" stroke-linejoin="round"/><path d="M1824.15,738.5 C1825.15,776.5 1829.5,803.5 1833.5,806.5 C1838.5,804.5 1846.47,770.5 1846.47,738.5 Z" fill="#f9f9fa" stroke-linejoin="round" transform="translate(1835.31,738.50) scale(0.7,0.9) translate(-1835.31,-738.50)"/><path d="M1831.7388,746.5 C1831.7388,772.5 1833.5,786.5 1834.5,789.5 C1836.5,786.5 1839.7740000000001,772.5 1839.3276,746.5 Z" fill="#dcdde3" stroke-linejoin="round"/><path d="M1824.5,714 L1845.5,714 C1850.5,714 1851.5,719 1850.5,727 C1848.5,744.5 1841.2,748.5 1835.0,748.5 C1828.8,748.5 1821.5,744.5 1819.5,727 C1818.5,719 1819.5,714 1824.5,714 Z" fill="#fafafb" stroke="#9c9ca1" stroke-width="1.45" stroke-linejoin="round"/><path d="M1901.2,738.5 C1902.2,776.5 1905,803.5 1909,806.5 C1914,804.5 1921.36,770.5 1921.36,738.5 Z" fill="#e1e1e6" stroke="#9c9ca1" stroke-width="1.45" stroke-linejoin="round"/><path d="M1901.2,738.5 C1902.2,776.5 1905,803.5 1909,806.5 C1914,804.5 1921.36,770.5 1921.36,738.5 Z" fill="#f9f9fa" stroke-linejoin="round" transform="translate(1911.28,738.50) scale(0.7,0.9) translate(-1911.28,-738.50)"/><path d="M1908.0544,746.5 C1908.0544,772.5 1909,786.5 1910,789.5 C1912,786.5 1915.312,772.5 1914.9088,746.5 Z" fill="#dcdde3" stroke-linejoin="round"/><path d="M1902,716 L1920,716 C1925,716 1926,721 1925,729 C1923,744.5 1916.6,748.5 1911.0,748.5 C1905.4,748.5 1899,744.5 1897,729 C1896,721 1897,716 1902,716 Z" fill="#fafafb" stroke="#9c9ca1" stroke-width="1.45" stroke-linejoin="round"/></g><g transform="translate(3878,0) scale(-1,1)"><path d="M1406,631 L1409,592 C1410,572 1412,562 1415,562 C1418,562 1418,575 1418,592 L1419,611 C1421,615 1423,612 1424,606 L1427,586 C1428,578 1431,576 1432,584 L1434,608 C1435,613 1437,613 1439,607 L1442,584 C1443,572 1444,568 1446,568 C1449,570 1449,584 1449,600 L1449,631 Z" fill="#e1e1e6" stroke="#9c9ca1" stroke-width="1.45" stroke-linejoin="round"/><path d="M1413,628 L1413,600 L1415,574 L1416,598 L1419,618 L1438,618 L1444,590 L1445,578 L1445,628 Z" fill="#f9f9fa" stroke-linejoin="round"/><path d="M1404,630 C1411,623 1443,622 1450,629 C1453,633 1453,640 1452,648 C1451,656 1443,659 1435,656 C1431,654 1426,653 1422,655 C1416,658 1403,658 1402,648 C1401,640 1401,634 1404,630 Z" fill="#fafafb" stroke="#9c9ca1" stroke-width="1.45" stroke-linejoin="round"/><path d="M1474,631 L1477,592 C1478,572 1480,562 1483,562 C1486,562 1486,575 1486,592 L1487,611 C1489,615 1491,612 1492,606 L1495,586 C1496,578 1499,576 1500,584 L1502,608 C1503,613 1505,613 1507,607 L1510,584 C1511,572 1512,568 1514,568 C1517,570 1517,584 1517,600 L1517,631 Z" fill="#e1e1e6" stroke="#9c9ca1" stroke-width="1.45" stroke-linejoin="round"/><path d="M1481,628 L1481,600 L1483,574 L1484,598 L1487,618 L1506,618 L1512,590 L1513,578 L1513,628 Z" fill="#f9f9fa" stroke-linejoin="round"/><path d="M1472,630 C1479,623 1511,622 1518,629 C1521,633 1521,640 1520,648 C1519,656 1511,659 1503,656 C1499,654 1494,653 1490,655 C1484,658 1471,658 1470,648 C1469,640 1469,634 1472,630 Z" fill="#fafafb" stroke="#9c9ca1" stroke-width="1.45" stroke-linejoin="round"/><path d="M1542,631 L1545,592 C1546,572 1548,562 1551,562 C1554,562 1554,575 1554,592 L1555,611 C1557,615 1559,612 1560,606 L1563,586 C1564,578 1567,576 1568,584 L1570,608 C1571,613 1573,613 1575,607 L1578,584 C1579,572 1580,568 1582,568 C1585,570 1585,584 1585,600 L1585,631 Z" fill="#e1e1e6" stroke="#9c9ca1" stroke-width="1.45" stroke-linejoin="round"/><path d="M1549,628 L1549,600 L1551,574 L1552,598 L1555,618 L1574,618 L1580,590 L1581,578 L1581,628 Z" fill="#f9f9fa" stroke-linejoin="round"/><path d="M1540,630 C1547,623 1579,622 1586,629 C1589,633 1589,640 1588,648 C1587,656 1579,659 1571,656 C1567,654 1562,653 1558,655 C1552,658 1539,658 1538,648 C1537,640 1537,634 1540,630 Z" fill="#fafafb" stroke="#9c9ca1" stroke-width="1.45" stroke-linejoin="round"/><path d="M1618,629 C1617,602.75 1620,569.5 1624,564.5 C1628,563.5 1646,592.75 1646,629 Z" fill="#e1e1e6" stroke="#9c9ca1" stroke-width="1.45" stroke-linejoin="round"/><path d="M1618,629 C1617,602.75 1620,569.5 1624,564.5 C1628,563.5 1646,592.75 1646,629 Z" fill="#f9f9fa" stroke-linejoin="round" transform="translate(1632.00,629.00) scale(0.7,0.9) translate(-1632.00,-629.00)"/><path d="M1627.24,625 C1627.24,596.75 1625,584.5 1626,580.5 C1628,584.5 1638.16,596.75 1637.6,625 Z" fill="#dcdde3" stroke-linejoin="round"/><path d="M1632.5,619 C1648.08,619 1654,636.1 1653,647.5 C1652,655 1642.75,657 1632.5,657 C1622.25,657 1613,655 1612,647.5 C1611,636.1 1616.92,619 1632.5,619 Z" fill="#fafafb" stroke="#9c9ca1" stroke-width="1.45" stroke-linejoin="round"/><path d="M1695,627 C1694,604.75 1694.5,575.5 1698.5,570.5 C1702.5,569.5 1717.5,594.75 1717.5,627 Z" fill="#e1e1e6" stroke="#9c9ca1" stroke-width="1.45" stroke-linejoin="round"/><path d="M1695,627 C1694,604.75 1694.5,575.5 1698.5,570.5 C1702.5,569.5 1717.5,594.75 1717.5,627 Z" fill="#f9f9fa" stroke-linejoin="round" transform="translate(1706.25,627.00) scale(0.7,0.9) translate(-1706.25,-627.00)"/><path d="M1702.425,623 C1702.425,598.75 1699.5,590.5 1700.5,586.5 C1702.5,590.5 1711.2,598.75 1710.75,623 Z" fill="#dcdde3" stroke-linejoin="round"/><path d="M1707.25,617 C1718.84,617 1723.5,634.55 1722.5,646.25 C1721.5,654 1714.875,656 1707.25,656 C1699.625,656 1693,654 1692,646.25 C1691,634.55 1695.66,617 1707.25,617 Z" fill="#fafafb" stroke="#9c9ca1" stroke-width="1.45" stroke-linejoin="round"/><path d="M1767,637 C1766,605.5 1764,567 1768,562 C1772,561 1787.5,595.5 1787.5,637 Z" fill="#e1e1e6" stroke="#9c9ca1" stroke-width="1.45" stroke-linejoin="round"/><path d="M1767,637 C1766,605.5 1764,567 1768,562 C1772,561 1787.5,595.5 1787.5,637 Z" fill="#f9f9fa" stroke-linejoin="round" transform="translate(1777.25,637.00) scale(0.7,0.9) translate(-1777.25,-637.00)"/><path d="M1773.765,633 C1773.765,599.5 1769,582 1770,578 C1772,582 1781.76,599.5 1781.35,633 Z" fill="#dcdde3" stroke-linejoin="round"/><path d="M1766,651.5 C1765,642.25 1770.3,627 1778.25,627 C1786.2,627 1791.5,642.25 1790.5,651.5 C1790.5,657.5 1787.5,657.5 1784.5,657.5 L1772,657.5 C1769,657.5 1766,657.5 1766,651.5 Z" fill="#fafafb" stroke="#9c9ca1" stroke-width="1.45" stroke-linejoin="round"/><path d="M1818,627 C1817,601.25 1817.5,568.5 1821.5,563.5 C1825.5,562.5 1837,591.25 1837,627 Z" fill="#e1e1e6" stroke="#9c9ca1" stroke-width="1.45" stroke-linejoin="round"/><path d="M1818,627 C1817,601.25 1817.5,568.5 1821.5,563.5 C1825.5,562.5 1837,591.25 1837,627 Z" fill="#f9f9fa" stroke-linejoin="round" transform="translate(1827.50,627.00) scale(0.7,0.9) translate(-1827.50,-627.00)"/><path d="M1824.27,623 C1824.27,595.25 1822.5,583.5 1823.5,579.5 C1825.5,583.5 1831.68,595.25 1831.3,623 Z" fill="#dcdde3" stroke-linejoin="round"/><path d="M1816.5,652.5 C1815.5,637.75 1820.7,617 1828.5,617 C1836.3,617 1841.5,637.75 1840.5,652.5 C1840.5,658.5 1837.5,658.5 1834.5,658.5 L1822.5,658.5 C1819.5,658.5 1816.5,658.5 1816.5,652.5 Z" fill="#fafafb" stroke="#9c9ca1" stroke-width="1.45" stroke-linejoin="round"/><path d="M1901,624.5 C1900,599.75 1903,568 1907,563 C1911,562 1923,589.75 1923,624.5 Z" fill="#e1e1e6" stroke="#9c9ca1" stroke-width="1.45" stroke-linejoin="round"/><path d="M1901,624.5 C1900,599.75 1903,568 1907,563 C1911,562 1923,589.75 1923,624.5 Z" fill="#f9f9fa" stroke-linejoin="round" transform="translate(1912.00,624.50) scale(0.7,0.9) translate(-1912.00,-624.50)"/><path d="M1908.26,620.5 C1908.26,593.75 1908,583 1909,579 C1911,583 1916.84,593.75 1916.4,620.5 Z" fill="#dcdde3" stroke-linejoin="round"/><path d="M1899,648.5 C1898,634.5 1904.1,614.5 1913.25,614.5 C1922.4,614.5 1928.5,634.5 1927.5,648.5 C1927.5,654.5 1924.5,654.5 1921.5,654.5 L1905,654.5 C1902,654.5 1899,654.5 1899,648.5 Z" fill="#fafafb" stroke="#9c9ca1" stroke-width="1.45" stroke-linejoin="round"/><path d="M1473.5,738 L1475.5,769.5 C1476.5,796.5 1479,804.5 1482,804.5 C1486,804.5 1487,789.5 1488,774.5 L1492,760 C1494,752 1498,752 1500,760 L1505,774.5 C1506,792.5 1509,794.5 1510,794.5 C1513,794.5 1516,784.5 1516,754.5 L1517,738 Z" fill="#e1e1e6" stroke="#9c9ca1" stroke-width="1.45" stroke-linejoin="round"/><path d="M1478.5,742 L1479.5,774.5 L1483,792.5 L1485,774.5 L1489,759 C1492,747 1500,747 1503,759 L1507,772.5 L1510,784.5 L1512,759.5 L1512,742 Z" fill="#f9f9fa" stroke-linejoin="round"/><path d="M1471.5,723.5 C1475.5,714.5 1487.525,716.5 1495.25,719.5 C1502.975,714.5 1517,711.5 1520,721.5 C1522,729.5 1520,736 1516,740 C1506,734 1484.95,744 1474.5,742 C1469.5,736 1468.5,729.5 1471.5,723.5 Z" fill="#fafafb" stroke="#9c9ca1" stroke-width="1.45" stroke-linejoin="round"/><path d="M1545,740 L1547,773 C1548,800 1551.5,808 1554.5,808 C1558.5,808 1559.5,793 1560.5,778 L1562,761 C1564,753 1568,753 1570,761 L1573.5,775.5 C1574.5,793.5 1577.5,795.5 1578.5,795.5 C1581.5,795.5 1584,785.5 1584,755.5 L1585,740 Z" fill="#e1e1e6" stroke="#9c9ca1" stroke-width="1.45" stroke-linejoin="round"/><path d="M1550,744 L1551,778 L1555.5,796 L1557.5,778 L1559,760 C1562,748 1570,748 1573,760 L1575.5,773.5 L1578.5,785.5 L1580,760.5 L1580,744 Z" fill="#f9f9fa" stroke-linejoin="round"/><path d="M1543,721.5 C1547,712.5 1557.8,714.5 1565.0,717.5 C1572.2,712.5 1585,709.5 1588,719.5 C1590,727.5 1588,738 1584,742 C1574,736 1555.4,746 1546,744 C1541,738 1540,727.5 1543,721.5 Z" fill="#fafafb" stroke="#9c9ca1" stroke-width="1.45" stroke-linejoin="round"/><path d="M1621.925,737 C1622.925,775.75 1624.5,803.5 1628.5,806.5 C1633.5,804.5 1650.365,769.75 1650.365,737 Z" fill="#e1e1e6" stroke="#9c9ca1" stroke-width="1.45" stroke-linejoin="round"/><path d="M1621.925,737 C1622.925,775.75 1624.5,803.5 1628.5,806.5 C1633.5,804.5 1650.365,769.75 1650.365,737 Z" fill="#f9f9fa" stroke-linejoin="round" transform="translate(1636.14,737.00) scale(0.7,0.9) translate(-1636.14,-737.00)"/><path d="M1631.5946,745 C1631.5946,771.75 1628.5,786.5 1629.5,789.5 C1631.5,786.5 1641.833,771.75 1641.2642,745 Z" fill="#dcdde3" stroke-linejoin="round"/><path d="M1635.75,713.5 C1652.5,713.5 1656.5,723.5 1655.5,730.25 C1654.5,743 1643.65,747 1635.75,747 C1627.85,747 1617,743 1616,730.25 C1615,723.5 1619,713.5 1635.75,713.5 Z" fill="#fafafb" stroke="#9c9ca1" stroke-width="1.45" stroke-linejoin="round"/><path d="M1691.175,746 C1692.175,780.25 1688,803.5 1692,806.5 C1697,804.5 1716.015,774.25 1716.015,746 Z" fill="#e1e1e6" stroke="#9c9ca1" stroke-width="1.45" stroke-linejoin="round"/><path d="M1691.175,746 C1692.175,780.25 1688,803.5 1692,806.5 C1697,804.5 1716.015,774.25 1716.015,746 Z" fill="#f9f9fa" stroke-linejoin="round" transform="translate(1703.60,746.00) scale(0.7,0.9) translate(-1703.60,-746.00)"/><path d="M1699.6206,754 C1699.6206,776.25 1692,786.5 1693,789.5 C1695,786.5 1708.563,776.25 1708.0662,754 Z" fill="#dcdde3" stroke-linejoin="round"/><path d="M1703.25,718 C1717.5,718 1721.5,728 1720.5,737.0 C1719.5,752 1710.15,756 1703.25,756 C1696.35,756 1687,752 1686,737.0 C1685,728 1689,718 1703.25,718 Z" fill="#fafafb" stroke="#9c9ca1" stroke-width="1.45" stroke-linejoin="round"/><path d="M1758.275,738.5 C1759.275,777.25 1762,805 1766,808 C1771,806 1778.795,771.25 1778.795,738.5 Z" fill="#e1e1e6" stroke="#9c9ca1" stroke-width="1.45" stroke-linejoin="round"/><path d="M1758.275,738.5 C1759.275,777.25 1762,805 1766,808 C1771,806 1778.795,771.25 1778.795,738.5 Z" fill="#f9f9fa" stroke-linejoin="round" transform="translate(1768.54,738.50) scale(0.7,0.9) translate(-1768.54,-738.50)"/><path d="M1765.2518,746.5 C1765.2518,773.25 1766,788 1767,791 C1769,788 1772.6390000000001,773.25 1772.2286000000001,746.5 Z" fill="#dcdde3" stroke-linejoin="round"/><path d="M1759,716 L1777.5,716 C1782.5,716 1783.5,721 1782.5,729 C1780.5,744.5 1773.95,748.5 1768.25,748.5 C1762.55,748.5 1756,744.5 1754,729 C1753,721 1754,716 1759,716 Z" fill="#fafafb" stroke="#9c9ca1" stroke-width="1.45" stroke-linejoin="round"/><path d="M1824.15,738.5 C1825.15,776.5 1829.5,803.5 1833.5,806.5 C1838.5,804.5 1846.47,770.5 1846.47,738.5 Z" fill="#e1e1e6" stroke="#9c9ca1" stroke-width="1.45" stroke-linejoin="round"/><path d="M1824.15,738.5 C1825.15,776.5 1829.5,803.5 1833.5,806.5 C1838.5,804.5 1846.47,770.5 1846.47,738.5 Z" fill="#f9f9fa" stroke-linejoin="round" transform="translate(1835.31,738.50) scale(0.7,0.9) translate(-1835.31,-738.50)"/><path d="M1831.7388,746.5 C1831.7388,772.5 1833.5,786.5 1834.5,789.5 C1836.5,786.5 1839.7740000000001,772.5 1839.3276,746.5 Z" fill="#dcdde3" stroke-linejoin="round"/><path d="M1824.5,714 L1845.5,714 C1850.5,714 1851.5,719 1850.5,727 C1848.5,744.5 1841.2,748.5 1835.0,748.5 C1828.8,748.5 1821.5,744.5 1819.5,727 C1818.5,719 1819.5,714 1824.5,714 Z" fill="#fafafb" stroke="#9c9ca1" stroke-width="1.45" stroke-linejoin="round"/><path d="M1901.2,738.5 C1902.2,776.5 1905,803.5 1909,806.5 C1914,804.5 1921.36,770.5 1921.36,738.5 Z" fill="#e1e1e6" stroke="#9c9ca1" stroke-width="1.45" stroke-linejoin="round"/><path d="M1901.2,738.5 C1902.2,776.5 1905,803.5 1909,806.5 C1914,804.5 1921.36,770.5 1921.36,738.5 Z" fill="#f9f9fa" stroke-linejoin="round" transform="translate(1911.28,738.50) scale(0.7,0.9) translate(-1911.28,-738.50)"/><path d="M1908.0544,746.5 C1908.0544,772.5 1909,786.5 1910,789.5 C1912,786.5 1915.312,772.5 1914.9088,746.5 Z" fill="#dcdde3" stroke-linejoin="round"/><path d="M1902,716 L1920,716 C1925,716 1926,721 1925,729 C1923,744.5 1916.6,748.5 1911.0,748.5 C1905.4,748.5 1899,744.5 1897,729 C1896,721 1897,716 1902,716 Z" fill="#fafafb" stroke="#9c9ca1" stroke-width="1.45" stroke-linejoin="round"/></g><g transform="translate(1019,0)"><path d="M1415,739.5 L1417,769.5 C1418,796.5 1419,804.5 1422,804.5 C1426,804.5 1427,789.5 1428,774.5 L1431,764 C1433,756 1437,756 1439,764 L1442.5,775.5 C1443.5,793.5 1446.5,795.5 1447.5,795.5 C1450.5,795.5 1452.5,785.5 1452.5,755.5 L1453.5,739.5 Z" fill="#e1e1e6" stroke="#9c9ca1" stroke-width="1.45" stroke-linejoin="round"/><path d="M1420,743.5 L1421,774.5 L1423,792.5 L1425,774.5 L1428,763 C1431,751 1439,751 1442,763 L1444.5,773.5 L1447.5,785.5 L1448.5,760.5 L1448.5,743.5 Z" fill="#f9f9fa" stroke-linejoin="round"/><path d="M1413,729.5 C1417,720.5 1427.275,722.5 1434.25,725.5 C1441.225,720.5 1453.5,717.5 1456.5,727.5 C1458.5,735.5 1456.5,737.5 1452.5,741.5 C1442.5,735.5 1424.95,745.5 1416,743.5 C1411,737.5 1410,735.5 1413,729.5 Z" fill="#fafafb" stroke="#9c9ca1" stroke-width="1.45" stroke-linejoin="round"/></g></svg>
<div class="t" style="left:1419.5px;top:533.3px;font-size:17px;color:#4a4a52;font-weight:400;letter-spacing:0.00px;">18</div>
<div class="t" style="left:1419.5px;top:817.6px;font-size:17px;color:#4a4a52;font-weight:400;letter-spacing:0.00px;">48</div>
<div class="t" style="left:1487.5px;top:533.3px;font-size:17px;color:#4a4a52;font-weight:400;letter-spacing:0.00px;">17</div>
<div class="t" style="left:1487.5px;top:817.6px;font-size:17px;color:#4a4a52;font-weight:400;letter-spacing:0.00px;">47</div>
<div class="t" style="left:1555.5px;top:533.3px;font-size:17px;color:#4a4a52;font-weight:400;letter-spacing:0.00px;">16</div>
<div class="t" style="left:1555.5px;top:817.6px;font-size:17px;color:#4a4a52;font-weight:400;letter-spacing:0.00px;">46</div>
<div class="t" style="left:1623.5px;top:533.3px;font-size:17px;color:#4a4a52;font-weight:400;letter-spacing:0.00px;">15</div>
<div class="t" style="left:1623.5px;top:817.6px;font-size:17px;color:#4a4a52;font-weight:400;letter-spacing:0.00px;">45</div>
<div class="t" style="left:1691.5px;top:533.3px;font-size:17px;color:#4a4a52;font-weight:400;letter-spacing:0.00px;">14</div>
<div class="t" style="left:1691.5px;top:817.6px;font-size:17px;color:#4a4a52;font-weight:400;letter-spacing:0.00px;">44</div>
<div class="t" style="left:1759.5px;top:533.3px;font-size:17px;color:#4a4a52;font-weight:400;letter-spacing:0.00px;">13</div>
<div class="t" style="left:1759.5px;top:817.6px;font-size:17px;color:#4a4a52;font-weight:400;letter-spacing:0.00px;">43</div>
<div class="t" style="left:1827.5px;top:533.3px;font-size:17px;color:#4a4a52;font-weight:400;letter-spacing:0.00px;">12</div>
<div class="t" style="left:1827.5px;top:817.6px;font-size:17px;color:#4a4a52;font-weight:400;letter-spacing:0.00px;">42</div>
<div class="t" style="left:1896.2px;top:533.3px;font-size:17px;color:#4a4a52;font-weight:400;letter-spacing:0.00px;">11</div>
<div class="t" style="left:1895.5px;top:817.6px;font-size:17px;color:#4a4a52;font-weight:400;letter-spacing:0.00px;">41</div>
<div class="t" style="left:1963.5px;top:533.3px;font-size:17px;color:#4a4a52;font-weight:400;letter-spacing:0.00px;">21</div>
<div class="t" style="left:1963.5px;top:817.6px;font-size:17px;color:#4a4a52;font-weight:400;letter-spacing:0.00px;">31</div>
<div class="t" style="left:2031.5px;top:533.3px;font-size:17px;color:#4a4a52;font-weight:400;letter-spacing:0.00px;">22</div>
<div class="t" style="left:2031.5px;top:817.6px;font-size:17px;color:#4a4a52;font-weight:400;letter-spacing:0.00px;">32</div>
<div class="t" style="left:2099.5px;top:533.3px;font-size:17px;color:#4a4a52;font-weight:400;letter-spacing:0.00px;">23</div>
<div class="t" style="left:2099.5px;top:817.6px;font-size:17px;color:#4a4a52;font-weight:400;letter-spacing:0.00px;">33</div>
<div class="t" style="left:2167.5px;top:533.3px;font-size:17px;color:#4a4a52;font-weight:400;letter-spacing:0.00px;">24</div>
<div class="t" style="left:2167.5px;top:817.6px;font-size:17px;color:#4a4a52;font-weight:400;letter-spacing:0.00px;">34</div>
<div class="t" style="left:2235.5px;top:533.3px;font-size:17px;color:#4a4a52;font-weight:400;letter-spacing:0.00px;">25</div>
<div class="t" style="left:2235.5px;top:817.6px;font-size:17px;color:#4a4a52;font-weight:400;letter-spacing:0.00px;">35</div>
<div class="t" style="left:2303.5px;top:533.3px;font-size:17px;color:#4a4a52;font-weight:400;letter-spacing:0.00px;">26</div>
<div class="t" style="left:2303.5px;top:817.6px;font-size:17px;color:#4a4a52;font-weight:400;letter-spacing:0.00px;">36</div>
<div class="t" style="left:2371.5px;top:533.3px;font-size:17px;color:#4a4a52;font-weight:400;letter-spacing:0.00px;">27</div>
<div class="t" style="left:2371.5px;top:817.6px;font-size:17px;color:#4a4a52;font-weight:400;letter-spacing:0.00px;">37</div>
<div class="t" style="left:2439.5px;top:533.3px;font-size:17px;color:#4a4a52;font-weight:400;letter-spacing:0.00px;">28</div>
<div class="t" style="left:2439.5px;top:817.6px;font-size:17px;color:#4a4a52;font-weight:400;letter-spacing:0.00px;">38</div>
<div class="b" style="left:1576.5px;top:794.5px;width:24.0px;height:24.0px;background:#5b54e0;border-radius:50%"></div>
<svg class="b" style="left:1582.0px;top:800.0px" width="12" height="12" viewBox="0 0 24 24" fill="none" stroke="#ffffff" stroke-width="2.0" stroke-linecap="round" stroke-linejoin="round" ><path d="M14.5 4h-5L7 7H4a2 2 0 0 0-2 2v9a2 2 0 0 0 2 2h16a2 2 0 0 0 2-2V9a2 2 0 0 0-2-2h-3l-2.5-3z"/><circle cx="12" cy="13" r="3"/></svg>
<div class="t" style="left:988.0px;top:874.6px;font-size:18.5px;color:#66666e;font-weight:400;letter-spacing:0.00px;">Категории</div>
<div class="b" style="left:988px;top:911px;width:940px;height:353px;border:2px solid #dedee4;border-radius:9px;background:#fdfdfe;box-sizing:border-box;overflow:hidden"><div style="position:absolute;left:0;top:0;width:936px;height:26.6px;background:#dddcf7;border-bottom:1.5px dotted #b9b5f0"></div><div class="t" style="left:18.7px;top:-7.6px;font-size:20.8px;color:#5b54e0">Все категории</div><div class="t" style="left:18.7px;top:38.4px;font-size:20.8px;color:#0b0b12">Имплантация</div><div class="t" style="left:18.7px;top:84.8px;font-size:20.8px;color:#0b0b12">Детская стоматология</div><div class="t" style="left:18.7px;top:131.2px;font-size:20.8px;color:#0b0b12">Терапия</div><div class="t" style="left:18.7px;top:177.6px;font-size:20.8px;color:#0b0b12">Хирургия</div><div class="t" style="left:18.7px;top:224.0px;font-size:20.8px;color:#0b0b12">Ортопедия</div><div class="t" style="left:18.7px;top:270.4px;font-size:20.8px;color:#0b0b12">ортодонтия</div><div class="t" style="left:18.7px;top:316.8px;font-size:20.8px;color:#0b0b12">Рентгенография</div></div>
<div class="t" style="left:1949.3px;top:875.6px;font-size:18.5px;color:#3f3f46;font-weight:400;letter-spacing:0.00px;">Услуги и товары</div>
<div class="b" style="left:1950px;top:911px;width:939px;height:54px;border:2px solid #e0e0e6;border-radius:9px;background:#fdfdfe;box-sizing:border-box;box-shadow:0 1px 3px rgba(0,0,0,.04)"></div>
<div class="t" style="left:1972.0px;top:925.6px;font-size:24.5px;color:#6b6b73;font-weight:400;letter-spacing:0.03px;">Поиск услуги или кода</div>
<div class="b" style="left:1950px;top:980px;width:939px;height:351px;border:2px solid #e0e0e6;border-radius:9px;background:#fdfdfe;box-sizing:border-box"></div>
<div class="b" style="left:1952px;top:1048.7px;width:935px;height:74.29999999999995px;background:#dddcf7;border-top:1.5px dotted #c5c2f2;border-bottom:1.5px dotted #c5c2f2;box-sizing:border-box"></div>
<div class="t" style="left:1968.0px;top:994.3px;font-size:20.6px;color:#0b0b12;font-weight:400;letter-spacing:-0.01px;">1 посещение при пульпите (наложение мышьяка + временная пломба)</div>
<div class="t" style="left:1968.0px;top:1019.3px;font-size:19px;color:#66666e;font-weight:400;letter-spacing:0.00px;">Услуга · <span class="tg">T</span> 10 000</div>
<div class="t" style="left:1968.0px;top:1065.4px;font-size:20.6px;color:#5b54e0;font-weight:400;letter-spacing:0.00px;letter-spacing:0.1px">All on (4-6) (ZnO2) Корея</div>
<div class="t" style="left:1968.0px;top:1089.9px;font-size:19px;color:#7a74e6;font-weight:400;letter-spacing:0.00px;">Услуга · <span class="tg">T</span> 1 700 000</div>
<div class="t" style="left:1968.0px;top:1134.6px;font-size:20.6px;color:#0b0b12;font-weight:400;letter-spacing:0.00px;letter-spacing:0.1px">All on (4-6) (ZnO2) Швейцария</div>
<div class="t" style="left:1968.0px;top:1159.9px;font-size:19px;color:#66666e;font-weight:400;letter-spacing:0.00px;">Услуга · <span class="tg">T</span> 2 000 000</div>
<div class="t" style="left:1968.0px;top:1204.6px;font-size:20.6px;color:#0b0b12;font-weight:400;letter-spacing:0.00px;letter-spacing:0.1px">All-on-4-6 временный несъемный акриловый протез Корея</div>
<div class="t" style="left:1968.0px;top:1230.4px;font-size:19px;color:#66666e;font-weight:400;letter-spacing:0.00px;">Услуга · <span class="tg">T</span> 250 000</div>
<div class="t" style="left:1968.0px;top:1274.6px;font-size:20.6px;color:#0b0b12;font-weight:400;letter-spacing:0.00px;letter-spacing:0.1px">All-on-4-6 временный несъемный акриловый протез Швейцария</div>
<div class="t" style="left:1968.0px;top:1300.6px;font-size:19px;color:#66666e;font-weight:400;letter-spacing:0.00px;">Услуга · <span class="tg">T</span> 250 000</div>
<div class="b" style="left:2608px;top:1353.6px;width:132px;height:52.200000000000045px;background:#635bdf;border-radius:9px"></div>
<div class="t" style="left:2627.8px;top:1368.4px;font-size:22px;color:#fff;font-weight:400;letter-spacing:-0.62px;-webkit-text-stroke:0.4px #fff">Добавить</div>
<div class="b" style="left:2755px;top:1353.6px;width:134px;height:52.200000000000045px;border:2px solid #e0e0e6;border-radius:9px;background:#f9f9fb;box-sizing:border-box;box-shadow:0 1px 3px rgba(0,0,0,.05)"></div>
<div class="t" style="left:2776.5px;top:1368.4px;font-size:22px;color:#4a4a52;font-weight:400;letter-spacing:-0.60px;">Очистить</div>
<div class="b" style="left:988px;top:1434px;width:1901px;height:2px;background:#e6e6ec"></div>
<div class="t" style="left:988.0px;top:1467.9px;font-size:24.5px;color:#0b0b0f;font-weight:400;letter-spacing:-0.26px;">Позиции плана</div>
<div class="b" style="left:988px;top:1517px;width:1901px;height:383px;border:2px solid #e0e0e6;border-radius:10px;background:#fdfdfe;box-sizing:border-box"></div>
<div class="t" style="left:1003.7px;top:1541.2px;font-size:21px;color:#0b0b0f;font-weight:400;letter-spacing:0.00px;">Зуб</div>
<div class="t" style="left:1195.0px;top:1541.2px;font-size:21px;color:#0b0b0f;font-weight:400;letter-spacing:0.00px;">Позиция</div>
<div class="t" style="left:1788.3px;top:1541.2px;font-size:21px;color:#0b0b0f;font-weight:400;letter-spacing:0.00px;">Кол-во</div>
<div class="t" style="left:1952.5px;top:1541.2px;font-size:21px;color:#0b0b0f;font-weight:400;letter-spacing:0.00px;">Цена</div>
<div class="t" style="left:2180.0px;top:1541.2px;font-size:21px;color:#0b0b0f;font-weight:400;letter-spacing:0.00px;">Скидка</div>
<div class="t" style="left:2725.0px;top:1541.2px;font-size:21px;color:#0b0b0f;font-weight:400;letter-spacing:0.00px;">Сумма</div>
<div class="b" style="left:990px;top:1585px;width:1897px;height:2px;background:#e2e2e8"></div>
<div class="b" style="left:990px;top:1587px;width:1897px;height:157.5px;background:#effcf7"></div>
<div class="b" style="left:990px;top:1744.5px;width:1897px;height:2.0px;background:#e2e4e8"></div>
<div class="b" style="left:1004px;top:1638.7px;width:135.5px;height:52.299999999999955px;border:2px solid #e4e6ea;border-radius:9px;box-sizing:border-box;background:#f3fbf8"></div>
<div class="t" style="left:1195.0px;top:1604.4px;font-size:23.5px;color:#0b0b0f;font-weight:400;letter-spacing:0.21px;">All on (4-6) (ZnO2) Швейцария</div>
<div class="t" style="left:1195.0px;top:1635.0px;font-size:20.5px;color:#55555c;font-weight:400;letter-spacing:0.00px;">1 × 2 000 000</div>
<div class="b" style="left:1195px;top:1665.5px;width:114.5px;height:32.5px;border:2px solid #5fd8a4;border-radius:17px;background:#d3f7e6;box-sizing:border-box"></div>
<div class="t" style="left:1210.5px;top:1672.4px;font-size:19px;color:#1d3a2e;font-weight:400;letter-spacing:-0.54px;">Оплачено</div>
<div class="t" style="left:1195.0px;top:1708.1px;font-size:19.5px;color:#55555c;font-weight:400;letter-spacing:-0.42px;">Оплачено: <span class="tg">T</span> 2 000 000</div>
<div class="b" style="left:1788px;top:1639px;width:108px;height:52px;border:2px solid #e4e6ea;border-radius:9px;box-sizing:border-box;background:#f3fbf8"></div>
<div class="t" style="left:1812.0px;top:1653.0px;font-size:24.5px;color:#6b6b73;font-weight:400;letter-spacing:0.00px;">1</div>
<div class="b" style="left:1953.5px;top:1639px;width:152.0px;height:52px;border:2px solid #e4e6ea;border-radius:9px;box-sizing:border-box;background:#f3fbf8"></div>
<div class="t" style="left:1974.7px;top:1653.0px;font-size:24.5px;color:#76767e;font-weight:400;letter-spacing:-0.44px;">2 000 000</div>
<div class="b" style="left:2181.5px;top:1636px;width:162.0px;height:59px;border:2px solid #e4e6ea;border-radius:9px;box-sizing:border-box;background:#f3fbf8"></div>
<div class="t" style="left:2203.6px;top:1653.0px;font-size:24.5px;color:#76767e;width:77px;overflow:hidden">Без скидки</div>
<svg class="b" style="left:2296.0px;top:1653.0px" width="24" height="24" viewBox="0 0 24 24" fill="none" stroke="#9a9aa2" stroke-width="1.6" stroke-linecap="round" stroke-linejoin="round" ><path d="m6 9 6 6 6-6"/></svg>
<div class="b" style="left:2358.5px;top:1639px;width:108.0px;height:52px;border:2px solid #e4e6ea;border-radius:9px;box-sizing:border-box;background:#f3fbf8"></div>
<div class="t" style="left:2380.6px;top:1653.0px;font-size:24.5px;color:#76767e;font-weight:400;letter-spacing:0.00px;">0</div>
<div class="t" style="left:2684.0px;top:1654.4px;font-size:22px;color:#0b0b0f;font-weight:700;letter-spacing:-0.86px;"><span class="tg tgb">T</span> 2 000 000</div>
<div class="b" style="left:2821px;top:1636px;width:60px;height:59px;border:2px solid #e4e6ea;border-radius:9px;box-sizing:border-box;background:#f3fbf8;background:#f6fbf9"></div>
<svg class="b" style="left:2836.0px;top:1650.5px" width="30" height="30" viewBox="0 0 24 24" fill="none" stroke="#ef6079" stroke-width="1.6" stroke-linecap="round" stroke-linejoin="round" ><path d="M3 6h18"/><path d="M19 6v14c0 1-1 2-2 2H7c-1 0-2-1-2-2V6"/><path d="M8 6V4c0-1 1-2 2-2h4c1 0 2 1 2 2v2"/><line x1="10" x2="10" y1="11" y2="17"/><line x1="14" x2="14" y1="11" y2="17"/></svg>
<div class="b" style="left:990px;top:1746px;width:1897px;height:157.5px;background:#effcf7"></div>
<div class="b" style="left:990px;top:1903.5px;width:1897px;height:2.0px;background:#e2e4e8"></div>
<div class="b" style="left:1004px;top:1797.7px;width:135.5px;height:52.299999999999955px;border:2px solid #e4e6ea;border-radius:9px;box-sizing:border-box;background:#f3fbf8"></div>
<div class="t" style="left:1195.0px;top:1763.4px;font-size:23.5px;color:#0b0b0f;font-weight:400;letter-spacing:0.23px;">All on (4-6) (MK) Швейцария</div>
<div class="t" style="left:1195.0px;top:1794.0px;font-size:20.5px;color:#55555c;font-weight:400;letter-spacing:0.00px;">1 × 1 300 000</div>
<div class="b" style="left:1195px;top:1824.5px;width:114.5px;height:32.5px;border:2px solid #5fd8a4;border-radius:17px;background:#d3f7e6;box-sizing:border-box"></div>
<div class="t" style="left:1210.5px;top:1831.4px;font-size:19px;color:#1d3a2e;font-weight:400;letter-spacing:-0.54px;">Оплачено</div>
<div class="b" style="left:1788px;top:1798px;width:108px;height:52px;border:2px solid #e4e6ea;border-radius:9px;box-sizing:border-box;background:#f3fbf8"></div>
<div class="t" style="left:1812.0px;top:1812.0px;font-size:24.5px;color:#6b6b73;font-weight:400;letter-spacing:0.00px;">1</div>
<div class="b" style="left:1953.5px;top:1798px;width:152.0px;height:52px;border:2px solid #e4e6ea;border-radius:9px;box-sizing:border-box;background:#f3fbf8"></div>
<div class="t" style="left:1974.7px;top:1812.0px;font-size:24.5px;color:#76767e;font-weight:400;letter-spacing:-0.44px;">1 300 000</div>
<div class="b" style="left:2181.5px;top:1795px;width:162.0px;height:59px;border:2px solid #e4e6ea;border-radius:9px;box-sizing:border-box;background:#f3fbf8"></div>
<div class="t" style="left:2203.6px;top:1812.0px;font-size:24.5px;color:#76767e;width:77px;overflow:hidden">Без скидки</div>
<svg class="b" style="left:2296.0px;top:1812.0px" width="24" height="24" viewBox="0 0 24 24" fill="none" stroke="#9a9aa2" stroke-width="1.6" stroke-linecap="round" stroke-linejoin="round" ><path d="m6 9 6 6 6-6"/></svg>
<div class="b" style="left:2358.5px;top:1798px;width:108.0px;height:52px;border:2px solid #e4e6ea;border-radius:9px;box-sizing:border-box;background:#f3fbf8"></div>
<div class="t" style="left:2380.6px;top:1812.0px;font-size:24.5px;color:#76767e;font-weight:400;letter-spacing:0.00px;">0</div>
<div class="t" style="left:2684.0px;top:1813.4px;font-size:22px;color:#0b0b0f;font-weight:700;letter-spacing:-0.86px;"><span class="tg tgb">T</span> 1 300 000</div>
<div class="b" style="left:2821px;top:1795px;width:60px;height:59px;border:2px solid #e4e6ea;border-radius:9px;box-sizing:border-box;background:#f3fbf8;background:#f6fbf9"></div>
<svg class="b" style="left:2836.0px;top:1809.5px" width="30" height="30" viewBox="0 0 24 24" fill="none" stroke="#ef6079" stroke-width="1.6" stroke-linecap="round" stroke-linejoin="round" ><path d="M3 6h18"/><path d="M19 6v14c0 1-1 2-2 2H7c-1 0-2-1-2-2V6"/><path d="M8 6V4c0-1 1-2 2-2h4c1 0 2 1 2 2v2"/><line x1="10" x2="10" y1="11" y2="17"/><line x1="14" x2="14" y1="11" y2="17"/></svg>
<div class="b" style="left:2486px;top:1704.3px;width:400.5px;height:81.20000000000005px;background:#5f58e0;border-radius:41px;box-shadow:0 8px 18px rgba(70,60,190,.28)"></div>
<svg class="b" style="left:2504.2px;top:1729.5px" width="31" height="31" viewBox="0 0 24 24" fill="none" stroke="#ffffff" stroke-width="1.8" stroke-linecap="round" stroke-linejoin="round" ><path d="M15 2H6a2 2 0 0 0-2 2v16a2 2 0 0 0 2 2h12a2 2 0 0 0 2-2V7Z"/><path d="M14 2v4a2 2 0 0 0 2 2h4"/><path d="M10 9H8"/><path d="M16 13H8"/><path d="M16 17H8"/></svg>
<div class="t" style="left:2561.0px;top:1733.6px;font-size:25px;color:#fff;font-weight:400;letter-spacing:-0.41px;-webkit-text-stroke:0.45px #fff">Документы пациента</div>
<div class="b" style="left:2827.5px;top:1729px;width:37.0px;height:32px;background:#7b75ea;border-radius:16px"></div>
<div class="t" style="left:2840.2px;top:1736.2px;font-size:21px;color:#fff;font-weight:400;letter-spacing:0.00px;">1</div>
</body></html>
